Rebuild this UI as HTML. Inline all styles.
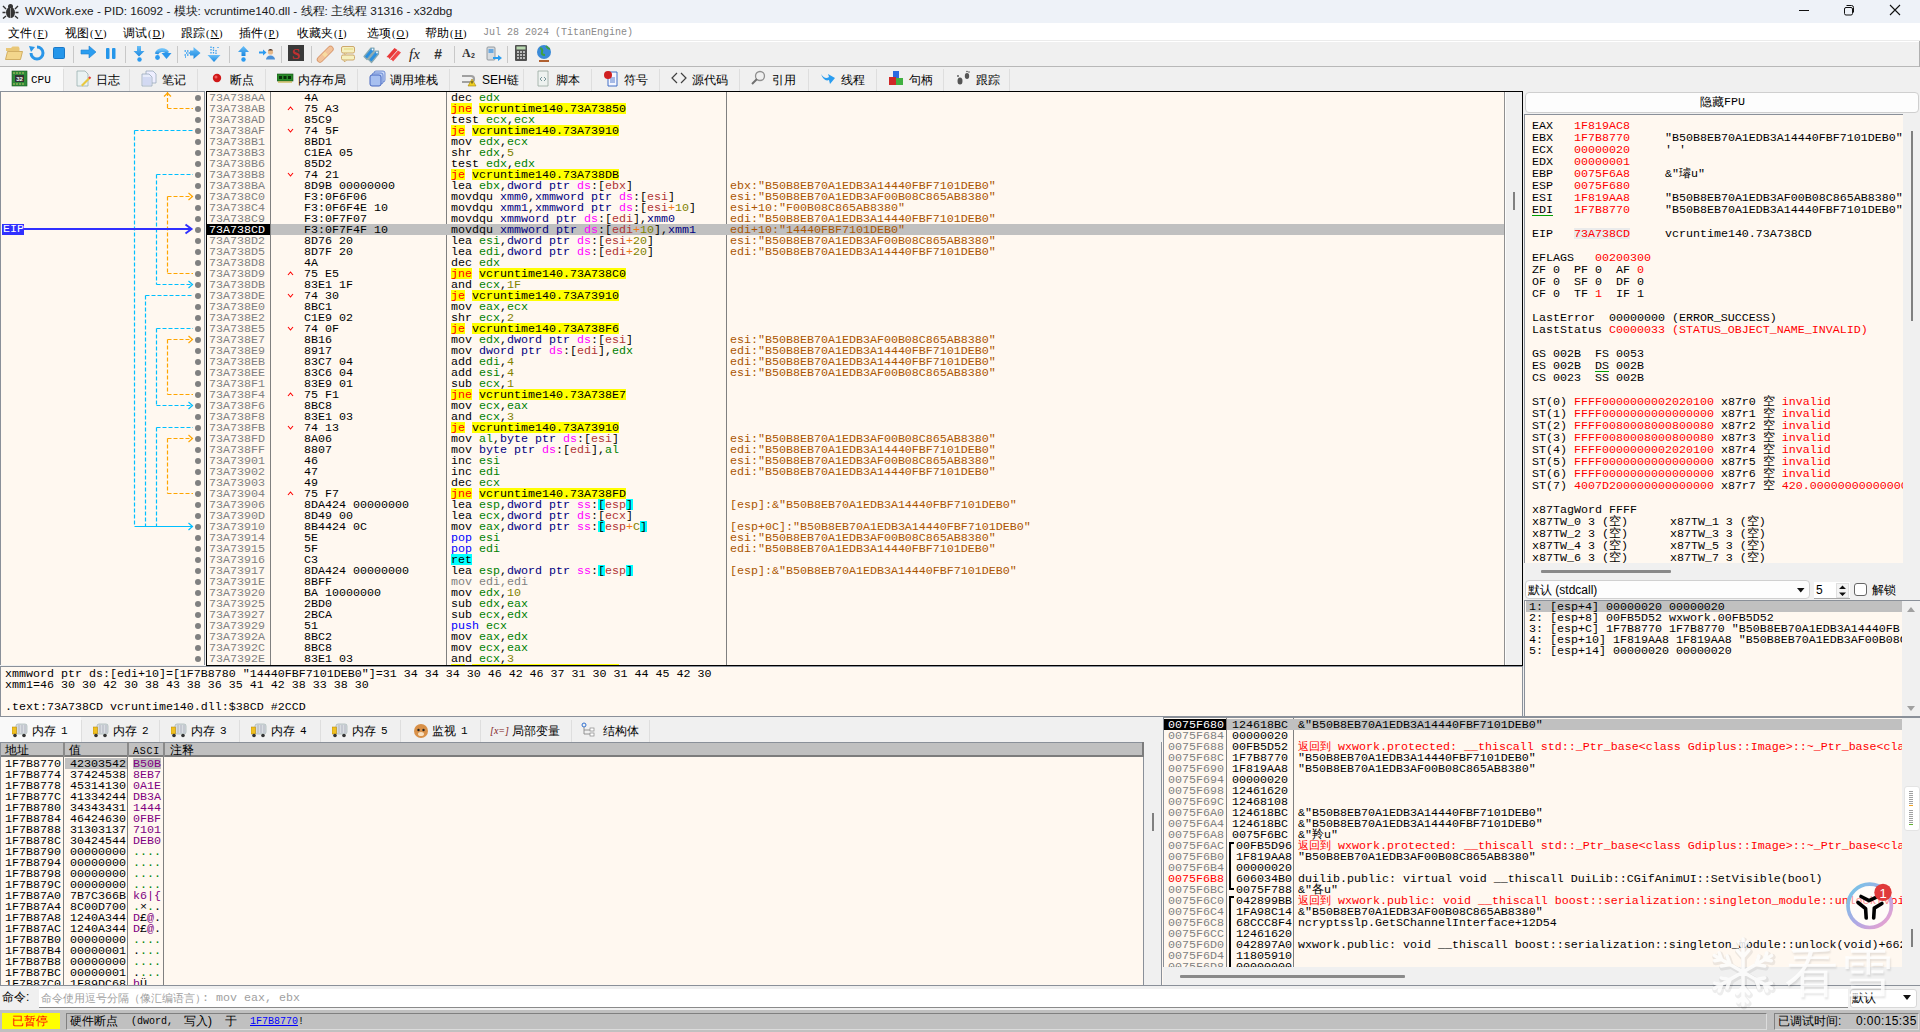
<!DOCTYPE html><html><head><meta charset="utf-8"><style>
html,body{margin:0;padding:0;width:1920px;height:1032px;overflow:hidden;background:#f0f0f0}
.a{position:absolute}
.m{font-family:"Liberation Mono",monospace;font-size:11.665px;line-height:11px;white-space:pre;color:#000}
.s{font-family:"Liberation Sans",sans-serif;white-space:pre;color:#000}
</style></head><body><div class="a" style="left:0px;top:0px;width:1920px;height:1032px;background:#f0f0f0"></div><div class="a" style="left:0px;top:0px;width:1920px;height:23px;background:#eef2f8"></div><div class="a" style="left:0px;top:23px;width:1920px;height:18px;background:#ffffff"></div><div class="a" style="left:0px;top:41px;width:1920px;height:25px;background:#f0f0f0"></div><div class="a" style="left:0px;top:66px;width:1920px;height:1px;background:#b8b8b8"></div><div class="a" style="left:0px;top:40px;width:1920px;height:1px;background:#ebebeb"></div><div class="a" style="left:0px;top:41px;width:1920px;height:1px;background:#ffffff"></div><div class="a" style="left:1919px;top:41px;width:1px;height:26px;background:#b0b0b0"></div><div class="a s" style="left:25px;top:4px;font-size:11.8px;line-height:15px;color:#1a1a1a">WXWork.exe - PID: 16092 - 模块: vcruntime140.dll - 线程: 主线程 31316 - x32dbg</div><svg class="a" style="left:2px;top:3px" width="17" height="16" viewBox="0 0 17 16"><ellipse cx="8.5" cy="9.5" rx="4.5" ry="5.5" fill="#333"/><circle cx="8.5" cy="3.5" r="2.5" fill="#333"/><path d="M4 6L1 3M13 6l3-3M3.5 9.5H0.5M13.5 9.5h3M4 13l-3 2.5M13 13l3 2.5" stroke="#333" stroke-width="1.4"/><path d="M8.5 5v10" stroke="#aaa" stroke-width="0.8"/></svg><svg class="a" style="left:1790px;top:0px" width="130" height="23"><path d="M9 10.5h10" stroke="#111" stroke-width="1"/><rect x="54.5" y="7.5" width="8" height="7.5" fill="none" stroke="#111" stroke-width="1" rx="1.5"/><path d="M56.5 5.5h5a2 2 0 0 1 2 2v5" fill="none" stroke="#111" stroke-width="1"/><path d="M100 5l10 10M110 5l-10 10" stroke="#111" stroke-width="1.1"/></svg><div class="a s" style="left:8px;top:26px;font-size:12px;line-height:15px;color:#000">文件</div><div class="a m" style="left:33px;top:27px;font-size:10.5px;line-height:14px;color:#000;font-family:Liberation Serif;letter-spacing:1px">(<u>F</u>)</div><div class="a s" style="left:65px;top:26px;font-size:12px;line-height:15px;color:#000">视图</div><div class="a m" style="left:90px;top:27px;font-size:10.5px;line-height:14px;color:#000;font-family:Liberation Serif;letter-spacing:1px">(<u>V</u>)</div><div class="a s" style="left:123px;top:26px;font-size:12px;line-height:15px;color:#000">调试</div><div class="a m" style="left:148px;top:27px;font-size:10.5px;line-height:14px;color:#000;font-family:Liberation Serif;letter-spacing:1px">(<u>D</u>)</div><div class="a s" style="left:181px;top:26px;font-size:12px;line-height:15px;color:#000">跟踪</div><div class="a m" style="left:206px;top:27px;font-size:10.5px;line-height:14px;color:#000;font-family:Liberation Serif;letter-spacing:1px">(<u>N</u>)</div><div class="a s" style="left:239px;top:26px;font-size:12px;line-height:15px;color:#000">插件</div><div class="a m" style="left:264px;top:27px;font-size:10.5px;line-height:14px;color:#000;font-family:Liberation Serif;letter-spacing:1px">(<u>P</u>)</div><div class="a s" style="left:297px;top:26px;font-size:12px;line-height:15px;color:#000">收藏夹</div><div class="a m" style="left:334px;top:27px;font-size:10.5px;line-height:14px;color:#000;font-family:Liberation Serif;letter-spacing:1px">(<u>I</u>)</div><div class="a s" style="left:367px;top:26px;font-size:12px;line-height:15px;color:#000">选项</div><div class="a m" style="left:392px;top:27px;font-size:10.5px;line-height:14px;color:#000;font-family:Liberation Serif;letter-spacing:1px">(<u>O</u>)</div><div class="a s" style="left:425px;top:26px;font-size:12px;line-height:15px;color:#000">帮助</div><div class="a m" style="left:450px;top:27px;font-size:10.5px;line-height:14px;color:#000;font-family:Liberation Serif;letter-spacing:1px">(<u>H</u>)</div><div class="a m" style="left:483px;top:27px;font-size:10px;color:#8a8a8a;line-height:12px">Jul 28 2024 (TitanEngine)</div><svg class="a" style="left:5px;top:44px" width="18" height="18" viewBox="0 0 18 18"><path d="M1 4h5l1.5-1.5h6l1 1.5v3H1z" fill="#e9c777"/><path d="M0.5 15.5l2-8h15l-2 8z" fill="#f3d68c" stroke="#c9a24e" stroke-width="0.8"/></svg><svg class="a" style="left:28px;top:44px" width="18" height="18" viewBox="0 0 18 18"><path d="M9 3a6 6 0 1 1-6 6" fill="none" stroke="#2a96e8" stroke-width="3"/><path d="M1 2l6 1-4 5z" fill="#2a96e8"/></svg><svg class="a" style="left:52px;top:44px" width="14" height="18" viewBox="0 0 14 18"><rect x="1.5" y="3.5" width="11" height="11" rx="1" fill="#2596ea" stroke="#1a78c8"/></svg><div class="a" style="left:73px;top:46px;width:1px;height:17px;background:#c8c8c8"></div><svg class="a" style="left:80px;top:43px" width="18" height="18" viewBox="0 0 18 18"><path d="M1 7h8V3l7 6-7 6v-4H1z" fill="#2a9df0" stroke="#1f80d0" stroke-width="0.6"/></svg><svg class="a" style="left:105px;top:45px" width="12" height="18" viewBox="0 0 12 18"><rect x="1" y="3" width="3.5" height="11" rx="1" fill="#2596ea"/><rect x="7" y="3" width="3.5" height="11" rx="1" fill="#2596ea"/></svg><div class="a" style="left:125px;top:46px;width:1px;height:17px;background:#c8c8c8"></div><svg class="a" style="left:0;top:40px" width="600" height="26" viewBox="0 40 600 26"><defs><linearGradient id="gb" x1="0" y1="0" x2="0" y2="1"><stop offset="0" stop-color="#6cc0f8"/><stop offset="1" stop-color="#1a88e0"/></linearGradient></defs><path d="M137 46h4v5h3.5l-5.5 5.5-5.5-5.5h3.5z" fill="url(#gb)"/><circle cx="139.5" cy="59.5" r="2.2" fill="#2a9af0"/></svg><svg class="a" style="left:0;top:40px" width="600" height="26" viewBox="0 40 600 26"><path d="M156.5 54a6 5.5 0 0 1 11 -1" fill="none" stroke="url(#gb)" stroke-width="3.6"/><path d="M161.5 53h10l-5 6z" fill="#2a96ec"/><circle cx="157.5" cy="57.5" r="2.4" fill="#2a9af0"/></svg><div class="a" style="left:177px;top:46px;width:1px;height:17px;background:#c8c8c8"></div><svg class="a" style="left:0;top:40px" width="600" height="26" viewBox="0 40 600 26"><path d="M190 50.5h3.5V47l7 6-7 6v-3.5H190z" fill="url(#gb)"/><path d="M184.5 51h1.5M187 51h1.5M186 53h1.5M188.5 53h1.5M184.5 55h1.5M187 55h1.5M185 57h1" stroke="#3aa0f0" stroke-width="1.3"/></svg><svg class="a" style="left:0;top:40px" width="600" height="26" viewBox="0 40 600 26"><path d="M207.5 55h13l-6.5 7z" fill="url(#gb)"/><path d="M211 46.5v1.5M213.5 47v1.5M211 49v1.5M213.5 49.5v1.5M216 50v1.5M211 52v1.5M213.5 52v1.5M216 52.5v1.5M218 47v1" stroke="#3aa0f0" stroke-width="1.3"/></svg><div class="a" style="left:229px;top:46px;width:1px;height:17px;background:#c8c8c8"></div><svg class="a" style="left:0;top:40px" width="600" height="26" viewBox="0 40 600 26"><path d="M243.5 46l5.5 6h-3.5v4h-4v-4H238z" fill="url(#gb)"/><circle cx="243.5" cy="59.5" r="2.2" fill="#2a9af0"/></svg><svg class="a" style="left:0;top:40px" width="600" height="26" viewBox="0 40 600 26"><path d="M259 51.5h4v-2l3.5 3-3.5 3v-2h-4z" fill="#2a9af0"/><path d="M266 59.5a4.5 4 0 0 1 9 0z" fill="#4a90d8"/><circle cx="270.5" cy="52" r="2.6" fill="#e8b888"/><path d="M268 50.5a2.6 2.2 0 0 1 5 0z" fill="#4a3020"/></svg><div class="a" style="left:281px;top:46px;width:1px;height:17px;background:#c8c8c8"></div><svg class="a" style="left:288px;top:45px" width="16" height="16" viewBox="0 0 16 16"><rect x="0" y="0" width="16" height="16" fill="#3a3a3a"/><text x="8" y="13.5" text-anchor="middle" font-family="Liberation Serif" font-weight="bold" font-size="15" fill="#c03030">S</text></svg><div class="a" style="left:311px;top:46px;width:1px;height:17px;background:#c8c8c8"></div><svg class="a" style="left:0;top:40px" width="600" height="26" viewBox="0 40 600 26"><path d="M320 59.5L330.5 49" stroke="#d89a70" stroke-width="6.4" stroke-linecap="round"/><path d="M320 59.5L330.5 49" stroke="#f2c29a" stroke-width="4.6" stroke-linecap="round"/><rect x="323" y="52.5" width="4" height="4" fill="#f8dca0" transform="rotate(-45 325 54.5)"/></svg><svg class="a" style="left:0;top:40px" width="600" height="26" viewBox="0 40 600 26"><rect x="341.5" y="46.5" width="13" height="6.5" rx="1.5" fill="#f6f0c0" stroke="#c8a060" stroke-width="0.9"/><path d="M344 53l1 1.5 1.5-1.5" fill="#f6f0c0" stroke="#c8a060" stroke-width="0.8"/><rect x="341.5" y="55" width="13" height="5" rx="1.5" fill="#f6f0c0" stroke="#c8a060" stroke-width="0.9"/><path d="M344 60l0.5 2 2-2" fill="#f6f0c0" stroke="#c8a060" stroke-width="0.8"/><path d="M344 49h9" stroke="#e8e090" stroke-width="1.5"/></svg><svg class="a" style="left:0;top:40px" width="600" height="26" viewBox="0 40 600 26"><path d="M364 56.5l7-8.5h3v3l-7 8.5z" fill="#2a90e0" stroke="#88a8b0" stroke-width="1.2" stroke-linejoin="round"/><path d="M368.5 59.5l7-8.5h3v3l-7 8.5z" fill="#2a90e0" stroke="#88a8b0" stroke-width="1.2" stroke-linejoin="round"/><circle cx="372.5" cy="49.5" r="0.9" fill="#fff"/><circle cx="377" cy="52.5" r="0.9" fill="#fff"/></svg><svg class="a" style="left:0;top:40px" width="600" height="26" viewBox="0 40 600 26"><path d="M386.5 57l8-9 3 2-8 9-1-1.5z" fill="#e83838"/><path d="M390 59.5l8-9 3 2-8 9-1-1.5z" fill="#f04848"/></svg><svg class="a" style="left:0;top:40px" width="600" height="26" viewBox="0 40 600 26"><text x="409" y="58.5" font-family="Liberation Serif" font-style="italic" font-size="15" fill="#222">fx</text></svg><svg class="a" style="left:0;top:40px" width="600" height="26" viewBox="0 40 600 26"><text x="434" y="59" font-family="Liberation Sans" font-style="italic" font-weight="bold" font-size="14" fill="#333">#</text></svg><div class="a" style="left:454px;top:46px;width:1px;height:17px;background:#c8c8c8"></div><svg class="a" style="left:462px;top:44px" width="16" height="18" viewBox="0 0 16 18"><text x="0" y="13" font-family="Liberation Serif" font-weight="bold" font-size="12" fill="#333">A</text><text x="9" y="14" font-family="Liberation Sans" font-weight="bold" font-size="7" fill="#333">2</text></svg><svg class="a" style="left:485px;top:44px" width="18" height="18" viewBox="0 0 18 18"><rect x="2" y="3" width="8" height="13" rx="1" fill="#d8dce0" stroke="#808890" stroke-width="0.8"/><rect x="3.5" y="5" width="5" height="4" fill="#6aa8e0"/><path d="M8 13h5v-2l4 3-4 3v-2H8z" fill="#2a9df0"/></svg><div class="a" style="left:507px;top:46px;width:1px;height:17px;background:#c8c8c8"></div><svg class="a" style="left:514px;top:44px" width="14" height="18" viewBox="0 0 14 18"><rect x="1" y="1" width="12" height="16" rx="1" fill="#505050"/><rect x="2.5" y="2.5" width="9" height="3" fill="#b8d8b0"/><path d="M3 8h2M6 8h2M9 8h2M3 11h2M6 11h2M9 11h2M3 14h2M6 14h2M9 14h2" stroke="#ddd" stroke-width="1.5"/></svg><svg class="a" style="left:536px;top:44px" width="17" height="18" viewBox="0 0 17 18"><circle cx="8" cy="8" r="7" fill="#3a8ad8"/><path d="M4 4q3 1 2 4t3 3M10 2q2 3 4 3" fill="none" stroke="#40a040" stroke-width="2"/><path d="M3 17h10" stroke="#b06030" stroke-width="2"/></svg><div class="a" style="left:0px;top:67px;width:63px;height:24px;background:#f9f9f9"></div><div class="a" style="left:63px;top:69px;width:1px;height:22px;background:#dedede"></div><div class="a" style="left:129px;top:69px;width:1px;height:22px;background:#dedede"></div><div class="a" style="left:197px;top:69px;width:1px;height:22px;background:#dedede"></div><div class="a" style="left:265px;top:69px;width:1px;height:22px;background:#dedede"></div><div class="a" style="left:357px;top:69px;width:1px;height:22px;background:#dedede"></div><div class="a" style="left:449px;top:69px;width:1px;height:22px;background:#dedede"></div><div class="a" style="left:523px;top:69px;width:1px;height:22px;background:#dedede"></div><div class="a" style="left:591px;top:69px;width:1px;height:22px;background:#dedede"></div><div class="a" style="left:659px;top:69px;width:1px;height:22px;background:#dedede"></div><div class="a" style="left:739px;top:69px;width:1px;height:22px;background:#dedede"></div><div class="a" style="left:808px;top:69px;width:1px;height:22px;background:#dedede"></div><div class="a" style="left:876px;top:69px;width:1px;height:22px;background:#dedede"></div><div class="a" style="left:943px;top:69px;width:1px;height:22px;background:#dedede"></div><div class="a" style="left:1009px;top:69px;width:1px;height:22px;background:#dedede"></div><svg class="a" style="left:11px;top:70px" width="17" height="17" viewBox="0 0 17 17"><rect x="1" y="1" width="15" height="15" fill="#2e8a3a" stroke="#1a5a20" stroke-width="0.6"/><rect x="4" y="5" width="9" height="7" fill="#333"/><text x="8.5" y="11" text-anchor="middle" font-family="Liberation Sans" font-weight="bold" font-size="6" fill="#fff">32</text><path d="M3 2v2M6 2v2M9 2v2M12 2v2M3 13v2M6 13v2M9 13v2M12 13v2" stroke="#e8d070" stroke-width="0.8"/></svg><div class="a m" style="left:31px;top:74px;font-size:11px;line-height:13px;color:#000">CPU</div><svg class="a" style="left:75px;top:70px" width="17" height="17" viewBox="0 0 17 17"><path d="M2 1h8l3 3v12H2z" fill="#eaf2f2" stroke="#9ab0b0" stroke-width="0.8"/><path d="M6 15l8-8 1.5 1.5-8 8z" fill="#e8c840"/><path d="M14 7l1.5 1.5" stroke="#e04040" stroke-width="2"/></svg><div class="a s" style="left:96px;top:73px;font-size:12px;line-height:14px;color:#000">日志</div><svg class="a" style="left:141px;top:70px" width="17" height="17" viewBox="0 0 17 17"><path d="M5 1h7l3 3v9H5z" fill="#eef" stroke="#9ab" stroke-width="0.8"/><path d="M1 4h7l3 3v9H1z" fill="#e8ecfa" stroke="#9ab" stroke-width="0.8"/><path d="M2 8h8M2 10h8M2 12h8M2 14h8" stroke="#a0b0e0" stroke-width="0.6"/></svg><div class="a s" style="left:162px;top:73px;font-size:12px;line-height:14px;color:#000">笔记</div><svg class="a" style="left:209px;top:70px" width="17" height="17" viewBox="0 0 17 17"><circle cx="8" cy="8" r="4.2" fill="#d01818"/><circle cx="7" cy="7" r="1.5" fill="#f06060"/></svg><div class="a s" style="left:230px;top:73px;font-size:12px;line-height:14px;color:#000">断点</div><svg class="a" style="left:277px;top:70px" width="17" height="17" viewBox="0 0 17 17"><rect x="0" y="4" width="16" height="7" fill="#2a8a2a" stroke="#145014" stroke-width="0.6"/><rect x="2" y="6" width="3" height="3" fill="#0a300a"/><rect x="6.5" y="6" width="3" height="3" fill="#0a300a"/><rect x="11" y="6" width="3" height="3" fill="#0a300a"/><path d="M1 12h14" stroke="#c8b040" stroke-width="1.2"/></svg><div class="a s" style="left:298px;top:73px;font-size:12px;line-height:14px;color:#000">内存布局</div><svg class="a" style="left:369px;top:70px" width="17" height="17" viewBox="0 0 17 17"><rect x="5" y="1" width="11" height="11" rx="2" fill="#c8d8f8" stroke="#5878c8" stroke-width="0.8"/><rect x="3" y="3" width="11" height="11" rx="2" fill="#b8ccf4" stroke="#5878c8" stroke-width="0.8"/><rect x="1" y="5" width="11" height="11" rx="2" fill="#a8c0f0" stroke="#4868c0" stroke-width="1"/></svg><div class="a s" style="left:390px;top:73px;font-size:12px;line-height:14px;color:#000">调用堆栈</div><svg class="a" style="left:461px;top:70px" width="17" height="17" viewBox="0 0 17 17"><path d="M1 6h9a3 3 0 0 1 0 6H1" fill="none" stroke="#a0a0a0" stroke-width="2.2"/><path d="M11 9l4 7H7z" fill="#f0d020" stroke="#a08010" stroke-width="0.6"/><path d="M11 11v2.5" stroke="#222" stroke-width="1"/></svg><div class="a s" style="left:482px;top:73px;font-size:12px;line-height:14px;color:#000">SEH链</div><svg class="a" style="left:535px;top:70px" width="17" height="17" viewBox="0 0 17 17"><path d="M3 1h10v15H3z" fill="#eef2f0" stroke="#98a8a0" stroke-width="0.8"/><path d="M7 7l-2 2 2 2M9 7l2 2-2 2" fill="none" stroke="#6a8a90" stroke-width="0.9"/></svg><div class="a s" style="left:556px;top:73px;font-size:12px;line-height:14px;color:#000">脚本</div><svg class="a" style="left:603px;top:70px" width="17" height="17" viewBox="0 0 17 17"><path d="M5 2h9v14H5z" fill="#f4f6ff" stroke="#3060c0" stroke-width="0.9"/><path d="M7 8h5M7 10h5M7 12h5" stroke="#3060c0" stroke-width="0.8"/><circle cx="5" cy="5" r="4" fill="#d02020"/></svg><div class="a s" style="left:624px;top:73px;font-size:12px;line-height:14px;color:#000">符号</div><svg class="a" style="left:671px;top:70px" width="17" height="17" viewBox="0 0 17 17"><path d="M6 3L1 8l5 5M10 3l5 5-5 5" fill="none" stroke="#404040" stroke-width="1.2"/></svg><div class="a s" style="left:692px;top:73px;font-size:12px;line-height:14px;color:#000">源代码</div><svg class="a" style="left:751px;top:70px" width="17" height="17" viewBox="0 0 17 17"><circle cx="9" cy="6" r="4.5" fill="none" stroke="#909090" stroke-width="1.3"/><path d="M6 9l-5 5" stroke="#707070" stroke-width="2"/></svg><div class="a s" style="left:772px;top:73px;font-size:12px;line-height:14px;color:#000">引用</div><svg class="a" style="left:820px;top:70px" width="17" height="17" viewBox="0 0 17 17"><path d="M1 4q4 6 8 3l-1-3 7 4-5 6-1-4q-5 2-8-6z" fill="#2a9df0"/></svg><div class="a s" style="left:841px;top:73px;font-size:12px;line-height:14px;color:#000">线程</div><svg class="a" style="left:888px;top:70px" width="17" height="17" viewBox="0 0 17 17"><rect x="5" y="1" width="6" height="7" fill="#2a6ae0"/><rect x="1" y="7" width="7" height="8" fill="#d02828"/><rect x="8" y="8" width="7" height="7" fill="#40b040"/></svg><div class="a s" style="left:909px;top:73px;font-size:12px;line-height:14px;color:#000">句柄</div><svg class="a" style="left:955px;top:70px" width="17" height="17" viewBox="0 0 17 17"><ellipse cx="5" cy="11" rx="2.5" ry="3.5" fill="#555"/><ellipse cx="12" cy="6" rx="2.2" ry="3" fill="#555"/><circle cx="3" cy="6" r="0.9" fill="#555"/><circle cx="12" cy="1.5" r="0.8" fill="#555"/><circle cx="14" cy="2" r="0.8" fill="#555"/></svg><div class="a s" style="left:976px;top:73px;font-size:12px;line-height:14px;color:#000">跟踪</div><div class="a" style="left:0px;top:91px;width:205px;height:574px;background:#fff8f0"></div><div class="a" style="left:0px;top:91px;width:205px;height:1px;background:#8a9099"></div><div class="a" style="left:204px;top:91px;width:1px;height:574px;background:#8a9099"></div><div class="a" style="left:0px;top:91px;width:1px;height:574px;background:#8a9099"></div><div class="a" style="left:206px;top:91px;width:1317px;height:575px;background:#000"></div><div class="a" style="left:207px;top:92px;width:1315px;height:573px;background:#fff8f0"></div><div class="a" style="left:1505px;top:92px;width:17px;height:573px;background:#f0f0f0"></div><div class="a" style="left:1504px;top:92px;width:1px;height:573px;background:#909090"></div><div class="a" style="left:1505px;top:92px;width:1px;height:573px;background:#fcfcfc"></div><div class="a" style="left:1513px;top:192px;width:2px;height:18px;background:#808080"></div><div class="a" style="left:270px;top:92px;width:1px;height:573px;background:#808080"></div><div class="a" style="left:446px;top:92px;width:1px;height:573px;background:#808080"></div><div class="a" style="left:726px;top:92px;width:1px;height:573px;background:#808080"></div><div class="a" style="left:195px;top:95px;width:6px;height:6px;background:#808080;border-radius:50%"></div><div class="a m" style="left:209px;top:93px;"><span style="color:#808080;">73A738AA</span></div><div class="a m" style="left:304px;top:93px;">4A</div><div class="a m" style="left:451px;top:93px;"><span style="color:#000;">dec</span> <span style="color:#008000;">edx</span></div><div class="a" style="left:195px;top:106px;width:6px;height:6px;background:#808080;border-radius:50%"></div><div class="a m" style="left:209px;top:104px;"><span style="color:#808080;">73A738AB</span></div><svg class="a" style="left:287px;top:105px" width="7" height="6"><path d="M1 5L3.5 2 6 5" fill="none" stroke="#f00" stroke-width="1.1"/></svg><div class="a m" style="left:304px;top:104px;">75 A3</div><div class="a m" style="left:451px;top:104px;"><span style="color:#ff0000;background:#ffff00;display:inline-block;height:10px;margin-top:-1px;padding-top:1px;vertical-align:top;">jne</span> <span style="color:#000;background:#ffff00;display:inline-block;height:10px;margin-top:-1px;padding-top:1px;vertical-align:top;">vcruntime140.73A73850</span></div><div class="a" style="left:195px;top:117px;width:6px;height:6px;background:#808080;border-radius:50%"></div><div class="a m" style="left:209px;top:115px;"><span style="color:#808080;">73A738AD</span></div><div class="a m" style="left:304px;top:115px;">85C9</div><div class="a m" style="left:451px;top:115px;"><span style="color:#000;">test</span> <span style="color:#008000;">ecx</span><span style="color:#000;">,</span><span style="color:#008000;">ecx</span></div><div class="a" style="left:195px;top:128px;width:6px;height:6px;background:#808080;border-radius:50%"></div><div class="a m" style="left:209px;top:126px;"><span style="color:#808080;">73A738AF</span></div><svg class="a" style="left:287px;top:128px" width="7" height="6"><path d="M1 1L3.5 4 6 1" fill="none" stroke="#f00" stroke-width="1.1"/></svg><div class="a m" style="left:304px;top:126px;">74 5F</div><div class="a m" style="left:451px;top:126px;"><span style="color:#ff0000;background:#ffff00;display:inline-block;height:10px;margin-top:-1px;padding-top:1px;vertical-align:top;">je</span> <span style="color:#000;background:#ffff00;display:inline-block;height:10px;margin-top:-1px;padding-top:1px;vertical-align:top;">vcruntime140.73A73910</span></div><div class="a" style="left:195px;top:139px;width:6px;height:6px;background:#808080;border-radius:50%"></div><div class="a m" style="left:209px;top:137px;"><span style="color:#808080;">73A738B1</span></div><div class="a m" style="left:304px;top:137px;">8BD1</div><div class="a m" style="left:451px;top:137px;"><span style="color:#000;">mov</span> <span style="color:#008000;">edx</span><span style="color:#000;">,</span><span style="color:#008000;">ecx</span></div><div class="a" style="left:195px;top:150px;width:6px;height:6px;background:#808080;border-radius:50%"></div><div class="a m" style="left:209px;top:148px;"><span style="color:#808080;">73A738B3</span></div><div class="a m" style="left:304px;top:148px;">C1EA 05</div><div class="a m" style="left:451px;top:148px;"><span style="color:#000;">shr</span> <span style="color:#008000;">edx</span><span style="color:#000;">,</span><span style="color:#828200;">5</span></div><div class="a" style="left:195px;top:161px;width:6px;height:6px;background:#808080;border-radius:50%"></div><div class="a m" style="left:209px;top:159px;"><span style="color:#808080;">73A738B6</span></div><div class="a m" style="left:304px;top:159px;">85D2</div><div class="a m" style="left:451px;top:159px;"><span style="color:#000;">test</span> <span style="color:#008000;">edx</span><span style="color:#000;">,</span><span style="color:#008000;">edx</span></div><div class="a" style="left:195px;top:172px;width:6px;height:6px;background:#808080;border-radius:50%"></div><div class="a m" style="left:209px;top:170px;"><span style="color:#808080;">73A738B8</span></div><svg class="a" style="left:287px;top:172px" width="7" height="6"><path d="M1 1L3.5 4 6 1" fill="none" stroke="#f00" stroke-width="1.1"/></svg><div class="a m" style="left:304px;top:170px;">74 21</div><div class="a m" style="left:451px;top:170px;"><span style="color:#ff0000;background:#ffff00;display:inline-block;height:10px;margin-top:-1px;padding-top:1px;vertical-align:top;">je</span> <span style="color:#000;background:#ffff00;display:inline-block;height:10px;margin-top:-1px;padding-top:1px;vertical-align:top;">vcruntime140.73A738DB</span></div><div class="a" style="left:195px;top:183px;width:6px;height:6px;background:#808080;border-radius:50%"></div><div class="a m" style="left:209px;top:181px;"><span style="color:#808080;">73A738BA</span></div><div class="a m" style="left:304px;top:181px;">8D9B 00000000</div><div class="a m" style="left:451px;top:181px;"><span style="color:#000;">lea</span> <span style="color:#008000;">ebx</span><span style="color:#000;">,</span><span style="color:#000080;">dword ptr</span> <span style="color:#ff00ff;">ds</span><span style="color:#000;">:</span><span style="color:#000;">[</span><span style="color:#b03434;">ebx</span><span style="color:#000;">]</span></div><div class="a m" style="left:730px;top:181px;"><span style="color:#aa5500;">ebx:"B50B8EB70A1EDB3A14440FBF7101DEB0"</span></div><div class="a" style="left:195px;top:194px;width:6px;height:6px;background:#808080;border-radius:50%"></div><div class="a m" style="left:209px;top:192px;"><span style="color:#808080;">73A738C0</span></div><div class="a m" style="left:304px;top:192px;">F3:0F6F06</div><div class="a m" style="left:451px;top:192px;"><span style="color:#000;">movdqu</span> <span style="color:#000080;">xmm0</span><span style="color:#000;">,</span><span style="color:#000080;">xmmword ptr</span> <span style="color:#ff00ff;">ds</span><span style="color:#000;">:</span><span style="color:#000;">[</span><span style="color:#b03434;">esi</span><span style="color:#000;">]</span></div><div class="a m" style="left:730px;top:192px;"><span style="color:#aa5500;">esi:"B50B8EB70A1EDB3AF00B08C865AB8380"</span></div><div class="a" style="left:195px;top:205px;width:6px;height:6px;background:#808080;border-radius:50%"></div><div class="a m" style="left:209px;top:203px;"><span style="color:#808080;">73A738C4</span></div><div class="a m" style="left:304px;top:203px;">F3:0F6F4E 10</div><div class="a m" style="left:451px;top:203px;"><span style="color:#000;">movdqu</span> <span style="color:#000080;">xmm1</span><span style="color:#000;">,</span><span style="color:#000080;">xmmword ptr</span> <span style="color:#ff00ff;">ds</span><span style="color:#000;">:</span><span style="color:#000;">[</span><span style="color:#b03434;">esi</span><span style="color:#f27711;">+</span><span style="color:#828200;">10</span><span style="color:#000;">]</span></div><div class="a m" style="left:730px;top:203px;"><span style="color:#aa5500;">esi+10:"F00B08C865AB8380"</span></div><div class="a" style="left:195px;top:216px;width:6px;height:6px;background:#808080;border-radius:50%"></div><div class="a m" style="left:209px;top:214px;"><span style="color:#808080;">73A738C9</span></div><div class="a m" style="left:304px;top:214px;">F3:0F7F07</div><div class="a m" style="left:451px;top:214px;"><span style="color:#000;">movdqu</span> <span style="color:#000080;">xmmword ptr</span> <span style="color:#ff00ff;">ds</span><span style="color:#000;">:</span><span style="color:#000;">[</span><span style="color:#b03434;">edi</span><span style="color:#000;">]</span><span style="color:#000;">,</span><span style="color:#000080;">xmm0</span></div><div class="a m" style="left:730px;top:214px;"><span style="color:#aa5500;">edi:"B50B8EB70A1EDB3A14440FBF7101DEB0"</span></div><div class="a" style="left:207px;top:224px;width:63px;height:11px;background:#000"></div><div class="a" style="left:271px;top:224px;width:1233px;height:11px;background:#c0c0c0"></div><div class="a" style="left:195px;top:227px;width:6px;height:6px;background:#808080;border-radius:50%"></div><div class="a m" style="left:209px;top:225px;"><span style="color:#fff;">73A738CD</span></div><div class="a m" style="left:304px;top:225px;">F3:0F7F4F 10</div><div class="a m" style="left:451px;top:225px;"><span style="color:#000;">movdqu</span> <span style="color:#000080;">xmmword ptr</span> <span style="color:#ff00ff;">ds</span><span style="color:#000;">:</span><span style="color:#000;">[</span><span style="color:#b03434;">edi</span><span style="color:#f27711;">+</span><span style="color:#828200;">10</span><span style="color:#000;">]</span><span style="color:#000;">,</span><span style="color:#000080;">xmm1</span></div><div class="a m" style="left:730px;top:225px;"><span style="color:#aa5500;">edi+10:"14440FBF7101DEB0"</span></div><div class="a" style="left:195px;top:238px;width:6px;height:6px;background:#808080;border-radius:50%"></div><div class="a m" style="left:209px;top:236px;"><span style="color:#808080;">73A738D2</span></div><div class="a m" style="left:304px;top:236px;">8D76 20</div><div class="a m" style="left:451px;top:236px;"><span style="color:#000;">lea</span> <span style="color:#008000;">esi</span><span style="color:#000;">,</span><span style="color:#000080;">dword ptr</span> <span style="color:#ff00ff;">ds</span><span style="color:#000;">:</span><span style="color:#000;">[</span><span style="color:#b03434;">esi</span><span style="color:#f27711;">+</span><span style="color:#828200;">20</span><span style="color:#000;">]</span></div><div class="a m" style="left:730px;top:236px;"><span style="color:#aa5500;">esi:"B50B8EB70A1EDB3AF00B08C865AB8380"</span></div><div class="a" style="left:195px;top:249px;width:6px;height:6px;background:#808080;border-radius:50%"></div><div class="a m" style="left:209px;top:247px;"><span style="color:#808080;">73A738D5</span></div><div class="a m" style="left:304px;top:247px;">8D7F 20</div><div class="a m" style="left:451px;top:247px;"><span style="color:#000;">lea</span> <span style="color:#008000;">edi</span><span style="color:#000;">,</span><span style="color:#000080;">dword ptr</span> <span style="color:#ff00ff;">ds</span><span style="color:#000;">:</span><span style="color:#000;">[</span><span style="color:#b03434;">edi</span><span style="color:#f27711;">+</span><span style="color:#828200;">20</span><span style="color:#000;">]</span></div><div class="a m" style="left:730px;top:247px;"><span style="color:#aa5500;">edi:"B50B8EB70A1EDB3A14440FBF7101DEB0"</span></div><div class="a" style="left:195px;top:260px;width:6px;height:6px;background:#808080;border-radius:50%"></div><div class="a m" style="left:209px;top:258px;"><span style="color:#808080;">73A738D8</span></div><div class="a m" style="left:304px;top:258px;">4A</div><div class="a m" style="left:451px;top:258px;"><span style="color:#000;">dec</span> <span style="color:#008000;">edx</span></div><div class="a" style="left:195px;top:271px;width:6px;height:6px;background:#808080;border-radius:50%"></div><div class="a m" style="left:209px;top:269px;"><span style="color:#808080;">73A738D9</span></div><svg class="a" style="left:287px;top:270px" width="7" height="6"><path d="M1 5L3.5 2 6 5" fill="none" stroke="#f00" stroke-width="1.1"/></svg><div class="a m" style="left:304px;top:269px;">75 E5</div><div class="a m" style="left:451px;top:269px;"><span style="color:#ff0000;background:#ffff00;display:inline-block;height:10px;margin-top:-1px;padding-top:1px;vertical-align:top;">jne</span> <span style="color:#000;background:#ffff00;display:inline-block;height:10px;margin-top:-1px;padding-top:1px;vertical-align:top;">vcruntime140.73A738C0</span></div><div class="a" style="left:195px;top:282px;width:6px;height:6px;background:#808080;border-radius:50%"></div><div class="a m" style="left:209px;top:280px;"><span style="color:#808080;">73A738DB</span></div><div class="a m" style="left:304px;top:280px;">83E1 1F</div><div class="a m" style="left:451px;top:280px;"><span style="color:#000;">and</span> <span style="color:#008000;">ecx</span><span style="color:#000;">,</span><span style="color:#828200;">1F</span></div><div class="a" style="left:195px;top:293px;width:6px;height:6px;background:#808080;border-radius:50%"></div><div class="a m" style="left:209px;top:291px;"><span style="color:#808080;">73A738DE</span></div><svg class="a" style="left:287px;top:293px" width="7" height="6"><path d="M1 1L3.5 4 6 1" fill="none" stroke="#f00" stroke-width="1.1"/></svg><div class="a m" style="left:304px;top:291px;">74 30</div><div class="a m" style="left:451px;top:291px;"><span style="color:#ff0000;background:#ffff00;display:inline-block;height:10px;margin-top:-1px;padding-top:1px;vertical-align:top;">je</span> <span style="color:#000;background:#ffff00;display:inline-block;height:10px;margin-top:-1px;padding-top:1px;vertical-align:top;">vcruntime140.73A73910</span></div><div class="a" style="left:195px;top:304px;width:6px;height:6px;background:#808080;border-radius:50%"></div><div class="a m" style="left:209px;top:302px;"><span style="color:#808080;">73A738E0</span></div><div class="a m" style="left:304px;top:302px;">8BC1</div><div class="a m" style="left:451px;top:302px;"><span style="color:#000;">mov</span> <span style="color:#008000;">eax</span><span style="color:#000;">,</span><span style="color:#008000;">ecx</span></div><div class="a" style="left:195px;top:315px;width:6px;height:6px;background:#808080;border-radius:50%"></div><div class="a m" style="left:209px;top:313px;"><span style="color:#808080;">73A738E2</span></div><div class="a m" style="left:304px;top:313px;">C1E9 02</div><div class="a m" style="left:451px;top:313px;"><span style="color:#000;">shr</span> <span style="color:#008000;">ecx</span><span style="color:#000;">,</span><span style="color:#828200;">2</span></div><div class="a" style="left:195px;top:326px;width:6px;height:6px;background:#808080;border-radius:50%"></div><div class="a m" style="left:209px;top:324px;"><span style="color:#808080;">73A738E5</span></div><svg class="a" style="left:287px;top:326px" width="7" height="6"><path d="M1 1L3.5 4 6 1" fill="none" stroke="#f00" stroke-width="1.1"/></svg><div class="a m" style="left:304px;top:324px;">74 0F</div><div class="a m" style="left:451px;top:324px;"><span style="color:#ff0000;background:#ffff00;display:inline-block;height:10px;margin-top:-1px;padding-top:1px;vertical-align:top;">je</span> <span style="color:#000;background:#ffff00;display:inline-block;height:10px;margin-top:-1px;padding-top:1px;vertical-align:top;">vcruntime140.73A738F6</span></div><div class="a" style="left:195px;top:337px;width:6px;height:6px;background:#808080;border-radius:50%"></div><div class="a m" style="left:209px;top:335px;"><span style="color:#808080;">73A738E7</span></div><div class="a m" style="left:304px;top:335px;">8B16</div><div class="a m" style="left:451px;top:335px;"><span style="color:#000;">mov</span> <span style="color:#008000;">edx</span><span style="color:#000;">,</span><span style="color:#000080;">dword ptr</span> <span style="color:#ff00ff;">ds</span><span style="color:#000;">:</span><span style="color:#000;">[</span><span style="color:#b03434;">esi</span><span style="color:#000;">]</span></div><div class="a m" style="left:730px;top:335px;"><span style="color:#aa5500;">esi:"B50B8EB70A1EDB3AF00B08C865AB8380"</span></div><div class="a" style="left:195px;top:348px;width:6px;height:6px;background:#808080;border-radius:50%"></div><div class="a m" style="left:209px;top:346px;"><span style="color:#808080;">73A738E9</span></div><div class="a m" style="left:304px;top:346px;">8917</div><div class="a m" style="left:451px;top:346px;"><span style="color:#000;">mov</span> <span style="color:#000080;">dword ptr</span> <span style="color:#ff00ff;">ds</span><span style="color:#000;">:</span><span style="color:#000;">[</span><span style="color:#b03434;">edi</span><span style="color:#000;">]</span><span style="color:#000;">,</span><span style="color:#008000;">edx</span></div><div class="a m" style="left:730px;top:346px;"><span style="color:#aa5500;">edi:"B50B8EB70A1EDB3A14440FBF7101DEB0"</span></div><div class="a" style="left:195px;top:359px;width:6px;height:6px;background:#808080;border-radius:50%"></div><div class="a m" style="left:209px;top:357px;"><span style="color:#808080;">73A738EB</span></div><div class="a m" style="left:304px;top:357px;">83C7 04</div><div class="a m" style="left:451px;top:357px;"><span style="color:#000;">add</span> <span style="color:#008000;">edi</span><span style="color:#000;">,</span><span style="color:#828200;">4</span></div><div class="a m" style="left:730px;top:357px;"><span style="color:#aa5500;">edi:"B50B8EB70A1EDB3A14440FBF7101DEB0"</span></div><div class="a" style="left:195px;top:370px;width:6px;height:6px;background:#808080;border-radius:50%"></div><div class="a m" style="left:209px;top:368px;"><span style="color:#808080;">73A738EE</span></div><div class="a m" style="left:304px;top:368px;">83C6 04</div><div class="a m" style="left:451px;top:368px;"><span style="color:#000;">add</span> <span style="color:#008000;">esi</span><span style="color:#000;">,</span><span style="color:#828200;">4</span></div><div class="a m" style="left:730px;top:368px;"><span style="color:#aa5500;">esi:"B50B8EB70A1EDB3AF00B08C865AB8380"</span></div><div class="a" style="left:195px;top:381px;width:6px;height:6px;background:#808080;border-radius:50%"></div><div class="a m" style="left:209px;top:379px;"><span style="color:#808080;">73A738F1</span></div><div class="a m" style="left:304px;top:379px;">83E9 01</div><div class="a m" style="left:451px;top:379px;"><span style="color:#000;">sub</span> <span style="color:#008000;">ecx</span><span style="color:#000;">,</span><span style="color:#828200;">1</span></div><div class="a" style="left:195px;top:392px;width:6px;height:6px;background:#808080;border-radius:50%"></div><div class="a m" style="left:209px;top:390px;"><span style="color:#808080;">73A738F4</span></div><svg class="a" style="left:287px;top:391px" width="7" height="6"><path d="M1 5L3.5 2 6 5" fill="none" stroke="#f00" stroke-width="1.1"/></svg><div class="a m" style="left:304px;top:390px;">75 F1</div><div class="a m" style="left:451px;top:390px;"><span style="color:#ff0000;background:#ffff00;display:inline-block;height:10px;margin-top:-1px;padding-top:1px;vertical-align:top;">jne</span> <span style="color:#000;background:#ffff00;display:inline-block;height:10px;margin-top:-1px;padding-top:1px;vertical-align:top;">vcruntime140.73A738E7</span></div><div class="a" style="left:195px;top:403px;width:6px;height:6px;background:#808080;border-radius:50%"></div><div class="a m" style="left:209px;top:401px;"><span style="color:#808080;">73A738F6</span></div><div class="a m" style="left:304px;top:401px;">8BC8</div><div class="a m" style="left:451px;top:401px;"><span style="color:#000;">mov</span> <span style="color:#008000;">ecx</span><span style="color:#000;">,</span><span style="color:#008000;">eax</span></div><div class="a" style="left:195px;top:414px;width:6px;height:6px;background:#808080;border-radius:50%"></div><div class="a m" style="left:209px;top:412px;"><span style="color:#808080;">73A738F8</span></div><div class="a m" style="left:304px;top:412px;">83E1 03</div><div class="a m" style="left:451px;top:412px;"><span style="color:#000;">and</span> <span style="color:#008000;">ecx</span><span style="color:#000;">,</span><span style="color:#828200;">3</span></div><div class="a" style="left:195px;top:425px;width:6px;height:6px;background:#808080;border-radius:50%"></div><div class="a m" style="left:209px;top:423px;"><span style="color:#808080;">73A738FB</span></div><svg class="a" style="left:287px;top:425px" width="7" height="6"><path d="M1 1L3.5 4 6 1" fill="none" stroke="#f00" stroke-width="1.1"/></svg><div class="a m" style="left:304px;top:423px;">74 13</div><div class="a m" style="left:451px;top:423px;"><span style="color:#ff0000;background:#ffff00;display:inline-block;height:10px;margin-top:-1px;padding-top:1px;vertical-align:top;">je</span> <span style="color:#000;background:#ffff00;display:inline-block;height:10px;margin-top:-1px;padding-top:1px;vertical-align:top;">vcruntime140.73A73910</span></div><div class="a" style="left:195px;top:436px;width:6px;height:6px;background:#808080;border-radius:50%"></div><div class="a m" style="left:209px;top:434px;"><span style="color:#808080;">73A738FD</span></div><div class="a m" style="left:304px;top:434px;">8A06</div><div class="a m" style="left:451px;top:434px;"><span style="color:#000;">mov</span> <span style="color:#008000;">al</span><span style="color:#000;">,</span><span style="color:#000080;">byte ptr</span> <span style="color:#ff00ff;">ds</span><span style="color:#000;">:</span><span style="color:#000;">[</span><span style="color:#b03434;">esi</span><span style="color:#000;">]</span></div><div class="a m" style="left:730px;top:434px;"><span style="color:#aa5500;">esi:"B50B8EB70A1EDB3AF00B08C865AB8380"</span></div><div class="a" style="left:195px;top:447px;width:6px;height:6px;background:#808080;border-radius:50%"></div><div class="a m" style="left:209px;top:445px;"><span style="color:#808080;">73A738FF</span></div><div class="a m" style="left:304px;top:445px;">8807</div><div class="a m" style="left:451px;top:445px;"><span style="color:#000;">mov</span> <span style="color:#000080;">byte ptr</span> <span style="color:#ff00ff;">ds</span><span style="color:#000;">:</span><span style="color:#000;">[</span><span style="color:#b03434;">edi</span><span style="color:#000;">]</span><span style="color:#000;">,</span><span style="color:#008000;">al</span></div><div class="a m" style="left:730px;top:445px;"><span style="color:#aa5500;">edi:"B50B8EB70A1EDB3A14440FBF7101DEB0"</span></div><div class="a" style="left:195px;top:458px;width:6px;height:6px;background:#808080;border-radius:50%"></div><div class="a m" style="left:209px;top:456px;"><span style="color:#808080;">73A73901</span></div><div class="a m" style="left:304px;top:456px;">46</div><div class="a m" style="left:451px;top:456px;"><span style="color:#000;">inc</span> <span style="color:#008000;">esi</span></div><div class="a m" style="left:730px;top:456px;"><span style="color:#aa5500;">esi:"B50B8EB70A1EDB3AF00B08C865AB8380"</span></div><div class="a" style="left:195px;top:469px;width:6px;height:6px;background:#808080;border-radius:50%"></div><div class="a m" style="left:209px;top:467px;"><span style="color:#808080;">73A73902</span></div><div class="a m" style="left:304px;top:467px;">47</div><div class="a m" style="left:451px;top:467px;"><span style="color:#000;">inc</span> <span style="color:#008000;">edi</span></div><div class="a m" style="left:730px;top:467px;"><span style="color:#aa5500;">edi:"B50B8EB70A1EDB3A14440FBF7101DEB0"</span></div><div class="a" style="left:195px;top:480px;width:6px;height:6px;background:#808080;border-radius:50%"></div><div class="a m" style="left:209px;top:478px;"><span style="color:#808080;">73A73903</span></div><div class="a m" style="left:304px;top:478px;">49</div><div class="a m" style="left:451px;top:478px;"><span style="color:#000;">dec</span> <span style="color:#008000;">ecx</span></div><div class="a" style="left:195px;top:491px;width:6px;height:6px;background:#808080;border-radius:50%"></div><div class="a m" style="left:209px;top:489px;"><span style="color:#808080;">73A73904</span></div><svg class="a" style="left:287px;top:490px" width="7" height="6"><path d="M1 5L3.5 2 6 5" fill="none" stroke="#f00" stroke-width="1.1"/></svg><div class="a m" style="left:304px;top:489px;">75 F7</div><div class="a m" style="left:451px;top:489px;"><span style="color:#ff0000;background:#ffff00;display:inline-block;height:10px;margin-top:-1px;padding-top:1px;vertical-align:top;">jne</span> <span style="color:#000;background:#ffff00;display:inline-block;height:10px;margin-top:-1px;padding-top:1px;vertical-align:top;">vcruntime140.73A738FD</span></div><div class="a" style="left:195px;top:502px;width:6px;height:6px;background:#808080;border-radius:50%"></div><div class="a m" style="left:209px;top:500px;"><span style="color:#808080;">73A73906</span></div><div class="a m" style="left:304px;top:500px;">8DA424 00000000</div><div class="a m" style="left:451px;top:500px;"><span style="color:#000;">lea</span> <span style="color:#008000;">esp</span><span style="color:#000;">,</span><span style="color:#000080;">dword ptr</span> <span style="color:#ff00ff;">ss</span><span style="color:#000;">:</span><span style="color:#000;background:#00ffff;display:inline-block;height:10px;margin-top:-1px;padding-top:1px;vertical-align:top;">[</span><span style="color:#b03434;">esp</span><span style="color:#000;background:#00ffff;display:inline-block;height:10px;margin-top:-1px;padding-top:1px;vertical-align:top;">]</span></div><div class="a m" style="left:730px;top:500px;"><span style="color:#aa5500;">[esp]:&amp;"B50B8EB70A1EDB3A14440FBF7101DEB0"</span></div><div class="a" style="left:195px;top:513px;width:6px;height:6px;background:#808080;border-radius:50%"></div><div class="a m" style="left:209px;top:511px;"><span style="color:#808080;">73A7390D</span></div><div class="a m" style="left:304px;top:511px;">8D49 00</div><div class="a m" style="left:451px;top:511px;"><span style="color:#000;">lea</span> <span style="color:#008000;">ecx</span><span style="color:#000;">,</span><span style="color:#000080;">dword ptr</span> <span style="color:#ff00ff;">ds</span><span style="color:#000;">:</span><span style="color:#000;">[</span><span style="color:#b03434;">ecx</span><span style="color:#000;">]</span></div><div class="a" style="left:195px;top:524px;width:6px;height:6px;background:#808080;border-radius:50%"></div><div class="a m" style="left:209px;top:522px;"><span style="color:#808080;">73A73910</span></div><div class="a m" style="left:304px;top:522px;">8B4424 0C</div><div class="a m" style="left:451px;top:522px;"><span style="color:#000;">mov</span> <span style="color:#008000;">eax</span><span style="color:#000;">,</span><span style="color:#000080;">dword ptr</span> <span style="color:#ff00ff;">ss</span><span style="color:#000;">:</span><span style="color:#000;background:#00ffff;display:inline-block;height:10px;margin-top:-1px;padding-top:1px;vertical-align:top;">[</span><span style="color:#b03434;">esp</span><span style="color:#f27711;">+</span><span style="color:#828200;">C</span><span style="color:#000;background:#00ffff;display:inline-block;height:10px;margin-top:-1px;padding-top:1px;vertical-align:top;">]</span></div><div class="a m" style="left:730px;top:522px;"><span style="color:#aa5500;">[esp+0C]:"B50B8EB70A1EDB3A14440FBF7101DEB0"</span></div><div class="a" style="left:195px;top:535px;width:6px;height:6px;background:#808080;border-radius:50%"></div><div class="a m" style="left:209px;top:533px;"><span style="color:#808080;">73A73914</span></div><div class="a m" style="left:304px;top:533px;">5E</div><div class="a m" style="left:451px;top:533px;"><span style="color:#0000ff;">pop</span> <span style="color:#008000;">esi</span></div><div class="a m" style="left:730px;top:533px;"><span style="color:#aa5500;">esi:"B50B8EB70A1EDB3AF00B08C865AB8380"</span></div><div class="a" style="left:195px;top:546px;width:6px;height:6px;background:#808080;border-radius:50%"></div><div class="a m" style="left:209px;top:544px;"><span style="color:#808080;">73A73915</span></div><div class="a m" style="left:304px;top:544px;">5F</div><div class="a m" style="left:451px;top:544px;"><span style="color:#0000ff;">pop</span> <span style="color:#008000;">edi</span></div><div class="a m" style="left:730px;top:544px;"><span style="color:#aa5500;">edi:"B50B8EB70A1EDB3A14440FBF7101DEB0"</span></div><div class="a" style="left:195px;top:557px;width:6px;height:6px;background:#808080;border-radius:50%"></div><div class="a m" style="left:209px;top:555px;"><span style="color:#808080;">73A73916</span></div><div class="a m" style="left:304px;top:555px;">C3</div><div class="a m" style="left:451px;top:555px;"><span style="color:#000;background:#00ffff;display:inline-block;height:10px;margin-top:-1px;padding-top:1px;vertical-align:top;">ret</span></div><div class="a" style="left:195px;top:568px;width:6px;height:6px;background:#808080;border-radius:50%"></div><div class="a m" style="left:209px;top:566px;"><span style="color:#808080;">73A73917</span></div><div class="a m" style="left:304px;top:566px;">8DA424 00000000</div><div class="a m" style="left:451px;top:566px;"><span style="color:#000;">lea</span> <span style="color:#008000;">esp</span><span style="color:#000;">,</span><span style="color:#000080;">dword ptr</span> <span style="color:#ff00ff;">ss</span><span style="color:#000;">:</span><span style="color:#000;background:#00ffff;display:inline-block;height:10px;margin-top:-1px;padding-top:1px;vertical-align:top;">[</span><span style="color:#b03434;">esp</span><span style="color:#000;background:#00ffff;display:inline-block;height:10px;margin-top:-1px;padding-top:1px;vertical-align:top;">]</span></div><div class="a m" style="left:730px;top:566px;"><span style="color:#aa5500;">[esp]:&amp;"B50B8EB70A1EDB3A14440FBF7101DEB0"</span></div><div class="a" style="left:195px;top:579px;width:6px;height:6px;background:#808080;border-radius:50%"></div><div class="a m" style="left:209px;top:577px;"><span style="color:#808080;">73A7391E</span></div><div class="a m" style="left:304px;top:577px;">8BFF</div><div class="a m" style="left:451px;top:577px;"><span style="color:#808080;">mov edi,edi</span></div><div class="a" style="left:195px;top:590px;width:6px;height:6px;background:#808080;border-radius:50%"></div><div class="a m" style="left:209px;top:588px;"><span style="color:#808080;">73A73920</span></div><div class="a m" style="left:304px;top:588px;">BA 10000000</div><div class="a m" style="left:451px;top:588px;"><span style="color:#000;">mov</span> <span style="color:#008000;">edx</span><span style="color:#000;">,</span><span style="color:#828200;">10</span></div><div class="a" style="left:195px;top:601px;width:6px;height:6px;background:#808080;border-radius:50%"></div><div class="a m" style="left:209px;top:599px;"><span style="color:#808080;">73A73925</span></div><div class="a m" style="left:304px;top:599px;">2BD0</div><div class="a m" style="left:451px;top:599px;"><span style="color:#000;">sub</span> <span style="color:#008000;">edx</span><span style="color:#000;">,</span><span style="color:#008000;">eax</span></div><div class="a" style="left:195px;top:612px;width:6px;height:6px;background:#808080;border-radius:50%"></div><div class="a m" style="left:209px;top:610px;"><span style="color:#808080;">73A73927</span></div><div class="a m" style="left:304px;top:610px;">2BCA</div><div class="a m" style="left:451px;top:610px;"><span style="color:#000;">sub</span> <span style="color:#008000;">ecx</span><span style="color:#000;">,</span><span style="color:#008000;">edx</span></div><div class="a" style="left:195px;top:623px;width:6px;height:6px;background:#808080;border-radius:50%"></div><div class="a m" style="left:209px;top:621px;"><span style="color:#808080;">73A73929</span></div><div class="a m" style="left:304px;top:621px;">51</div><div class="a m" style="left:451px;top:621px;"><span style="color:#0000ff;">push</span> <span style="color:#008000;">ecx</span></div><div class="a" style="left:195px;top:634px;width:6px;height:6px;background:#808080;border-radius:50%"></div><div class="a m" style="left:209px;top:632px;"><span style="color:#808080;">73A7392A</span></div><div class="a m" style="left:304px;top:632px;">8BC2</div><div class="a m" style="left:451px;top:632px;"><span style="color:#000;">mov</span> <span style="color:#008000;">eax</span><span style="color:#000;">,</span><span style="color:#008000;">edx</span></div><div class="a" style="left:195px;top:645px;width:6px;height:6px;background:#808080;border-radius:50%"></div><div class="a m" style="left:209px;top:643px;"><span style="color:#808080;">73A7392C</span></div><div class="a m" style="left:304px;top:643px;">8BC8</div><div class="a m" style="left:451px;top:643px;"><span style="color:#000;">mov</span> <span style="color:#008000;">ecx</span><span style="color:#000;">,</span><span style="color:#008000;">eax</span></div><div class="a" style="left:195px;top:656px;width:6px;height:6px;background:#808080;border-radius:50%"></div><div class="a m" style="left:209px;top:654px;"><span style="color:#808080;">73A7392E</span></div><div class="a m" style="left:304px;top:654px;">83E1 03</div><div class="a m" style="left:451px;top:654px;"><span style="color:#000;">and</span> <span style="color:#008000;">ecx</span><span style="color:#000;">,</span><span style="color:#828200;">3</span></div><div class="a" style="left:195px;top:667px;width:6px;height:6px;background:#808080;border-radius:50%"></div><div class="a m" style="left:209px;top:665px;"><span style="color:#808080;">73A73931</span></div><svg class="a" style="left:287px;top:667px" width="7" height="6"><path d="M1 1L3.5 4 6 1" fill="none" stroke="#f00" stroke-width="1.1"/></svg><div class="a m" style="left:304px;top:665px;">74 08</div><div class="a m" style="left:451px;top:665px;"><span style="color:#ff0000;background:#ffff00;display:inline-block;height:10px;margin-top:-1px;padding-top:1px;vertical-align:top;">je</span> <span style="color:#000;background:#ffff00;display:inline-block;height:10px;margin-top:-1px;padding-top:1px;vertical-align:top;">vcruntime140.73A7393B</span></div><div class="a" style="left:206px;top:665px;width:1317px;height:1px;background:#000"></div><svg class="a" style="left:0;top:0" width="205" height="665"><path d="M167.5 92V108.5" stroke="#ffa500" stroke-width="1.2" stroke-dasharray="4 2"/><path d="M167.5 108.5H193" stroke="#ffa500" stroke-width="1.2" stroke-dasharray="4 2"/><path d="M164.0 96.5L167.5 93L171.0 96.5" fill="none" stroke="#ffa500" stroke-width="1.2"/><path d="M134.5 130.5V526.5" stroke="#00bfff" stroke-width="1.2" stroke-dasharray="4 2"/><path d="M134.5 130.5H193" stroke="#00bfff" stroke-width="1.2" stroke-dasharray="4 2"/><path d="M156.5 174.5V284.5" stroke="#00bfff" stroke-width="1.2" stroke-dasharray="4 2"/><path d="M156.5 174.5H193" stroke="#00bfff" stroke-width="1.2" stroke-dasharray="4 2"/><path d="M156.5 284.5H193" stroke="#00bfff" stroke-width="1.2" stroke-dasharray="4 2"/><path d="M188.5 281.0L192.5 284.5L188.5 288.0" fill="none" stroke="#00bfff" stroke-width="1.2"/><path d="M167.5 196.5V273.5" stroke="#ffa500" stroke-width="1.2" stroke-dasharray="4 2"/><path d="M167.5 273.5H193" stroke="#ffa500" stroke-width="1.2" stroke-dasharray="4 2"/><path d="M167.5 196.5H193" stroke="#ffa500" stroke-width="1.2" stroke-dasharray="4 2"/><path d="M188.5 193.0L192.5 196.5L188.5 200.0" fill="none" stroke="#ffa500" stroke-width="1.2"/><path d="M145.5 295.5V526.5" stroke="#00bfff" stroke-width="1.2" stroke-dasharray="4 2"/><path d="M145.5 295.5H193" stroke="#00bfff" stroke-width="1.2" stroke-dasharray="4 2"/><path d="M156.5 328.5V405.5" stroke="#00bfff" stroke-width="1.2" stroke-dasharray="4 2"/><path d="M156.5 328.5H193" stroke="#00bfff" stroke-width="1.2" stroke-dasharray="4 2"/><path d="M156.5 405.5H193" stroke="#00bfff" stroke-width="1.2" stroke-dasharray="4 2"/><path d="M188.5 402.0L192.5 405.5L188.5 409.0" fill="none" stroke="#00bfff" stroke-width="1.2"/><path d="M167.5 339.5V394.5" stroke="#ffa500" stroke-width="1.2" stroke-dasharray="4 2"/><path d="M167.5 394.5H193" stroke="#ffa500" stroke-width="1.2" stroke-dasharray="4 2"/><path d="M167.5 339.5H193" stroke="#ffa500" stroke-width="1.2" stroke-dasharray="4 2"/><path d="M188.5 336.0L192.5 339.5L188.5 343.0" fill="none" stroke="#ffa500" stroke-width="1.2"/><path d="M156.5 427.5V526.5" stroke="#00bfff" stroke-width="1.2" stroke-dasharray="4 2"/><path d="M156.5 427.5H193" stroke="#00bfff" stroke-width="1.2" stroke-dasharray="4 2"/><path d="M167.5 438.5V493.5" stroke="#ffa500" stroke-width="1.2" stroke-dasharray="4 2"/><path d="M167.5 493.5H193" stroke="#ffa500" stroke-width="1.2" stroke-dasharray="4 2"/><path d="M167.5 438.5H193" stroke="#ffa500" stroke-width="1.2" stroke-dasharray="4 2"/><path d="M188.5 435.0L192.5 438.5L188.5 442.0" fill="none" stroke="#ffa500" stroke-width="1.2"/><path d="M134.5 526.5H193" stroke="#00bfff" stroke-width="1.2"/><path d="M188.5 523.0L192.5 526.5L188.5 530.0" fill="none" stroke="#00bfff" stroke-width="1.2"/><path d="M24 229H191" stroke="#3030ff" stroke-width="2"/><path d="M185.5 224.5L191.5 229L185.5 233.5" fill="none" stroke="#3030ff" stroke-width="2"/></svg><div class="a" style="left:2px;top:224px;width:22px;height:11px;background:#3030ff"></div><div class="a m" style="left:3px;top:224px;color:#fff">EIP</div><div class="a" style="left:1525px;top:92px;width:394px;height:21px;background:#fdfdfd;border:1px solid #cfcfcf;border-radius:4px;box-sizing:border-box"></div><div class="a s" style="left:1700px;top:95px;font-size:12px;line-height:14px;color:#000">隐藏</div><div class="a m" style="left:1724px;top:96px;font-size:11.665px;line-height:13px;color:#000">FPU</div><div class="a" style="left:1524px;top:114px;width:379px;height:449px;background:#fff8f0"></div><div class="a" style="left:1524px;top:114px;width:379px;height:1px;background:#8a9099"></div><div class="a" style="left:1524px;top:114px;width:1px;height:449px;background:#8a9099"></div><div class="a" style="left:1903px;top:114px;width:17px;height:449px;background:#f0f0f0"></div><div class="a" style="left:1911px;top:131px;width:2px;height:190px;background:#808080"></div><div class="a m" style="left:1532px;top:121px;">EAX   <span style="color:#ff0000;">1F819AC8</span></div><div class="a m" style="left:1532px;top:133px;">EBX   <span style="color:#ff0000;">1F7B8770</span>     "B50B8EB70A1EDB3A14440FBF7101DEB0"</div><div class="a m" style="left:1532px;top:145px;">ECX   <span style="color:#ff0000;">00000020</span>     ' '</div><div class="a m" style="left:1532px;top:157px;">EDX   <span style="color:#ff0000;">00000001</span></div><div class="a m" style="left:1532px;top:169px;">EBP   <span style="color:#ff0000;">0075F6A8</span>     &amp;"璿u"</div><div class="a m" style="left:1532px;top:181px;">ESP   <span style="color:#ff0000;">0075F680</span></div><div class="a m" style="left:1532px;top:193px;">ESI   <span style="color:#ff0000;">1F819AA8</span>     "B50B8EB70A1EDB3AF00B08C865AB8380"</div><div class="a m" style="left:1532px;top:205px;">EDI   <span style="color:#ff0000;">1F7B8770</span>     "B50B8EB70A1EDB3A14440FBF7101DEB0"</div><div class="a" style="left:1532px;top:215px;width:21px;height:1px;background:#00a000"></div><div class="a m" style="left:1532px;top:229px;">EIP   <span style="color:#ff0000;background:#ebebeb;display:inline-block;height:10px;margin-top:-1px;padding-top:1px;vertical-align:top;">73A738CD</span>     vcruntime140.73A738CD</div><div class="a m" style="left:1532px;top:253px;">EFLAGS   <span style="color:#ff0000;">00200300</span></div><div class="a m" style="left:1532px;top:265px;">ZF 0  PF 0  AF <span style="color:#ff0000;">0</span></div><div class="a m" style="left:1532px;top:277px;">OF 0  SF 0  DF 0</div><div class="a m" style="left:1532px;top:289px;">CF 0  TF <span style="color:#ff0000;">1</span>  IF 1</div><div class="a m" style="left:1532px;top:313px;">LastError  00000000 (ERROR_SUCCESS)</div><div class="a m" style="left:1532px;top:325px;">LastStatus <span style="color:#ff0000;">C0000033 (STATUS_OBJECT_NAME_INVALID)</span></div><div class="a m" style="left:1532px;top:349px;">GS 002B  FS 0053</div><div class="a m" style="left:1532px;top:361px;">ES 002B  DS 002B</div><div class="a m" style="left:1532px;top:373px;">CS 0023  SS 002B</div><div class="a" style="left:1595px;top:371px;width:14px;height:1px;background:#00a000"></div><div class="a m" style="left:1532px;top:397px;">ST(0) <span style="color:#ff0000;">FFFF0000000002020100</span> x87r0 空 <span style="color:#ff0000;">invalid</span></div><div class="a m" style="left:1532px;top:409px;">ST(1) <span style="color:#ff0000;">FFFF0000000000000000</span> x87r1 空 <span style="color:#ff0000;">invalid</span></div><div class="a m" style="left:1532px;top:421px;">ST(2) <span style="color:#ff0000;">FFFF0080008000800080</span> x87r2 空 <span style="color:#ff0000;">invalid</span></div><div class="a m" style="left:1532px;top:433px;">ST(3) <span style="color:#ff0000;">FFFF0080008000800080</span> x87r3 空 <span style="color:#ff0000;">invalid</span></div><div class="a m" style="left:1532px;top:445px;">ST(4) <span style="color:#ff0000;">FFFF0000000002020100</span> x87r4 空 <span style="color:#ff0000;">invalid</span></div><div class="a m" style="left:1532px;top:457px;">ST(5) <span style="color:#ff0000;">FFFF0000000000000000</span> x87r5 空 <span style="color:#ff0000;">invalid</span></div><div class="a m" style="left:1532px;top:469px;">ST(6) <span style="color:#ff0000;">FFFF0000000000000000</span> x87r6 空 <span style="color:#ff0000;">invalid</span></div><div class="a m" style="left:1532px;top:481px;">ST(7) <span style="color:#ff0000;">4007D200000000000000</span> x87r7 空 <span style="color:#ff0000;">420.000000000000000000</span></div><div class="a m" style="left:1532px;top:505px;">x87TagWord FFFF</div><div class="a m" style="left:1532px;top:517px;">x87TW_0 3 (空)      x87TW_1 3 (空)</div><div class="a m" style="left:1532px;top:529px;">x87TW_2 3 (空)      x87TW_3 3 (空)</div><div class="a m" style="left:1532px;top:541px;">x87TW_4 3 (空)      x87TW_5 3 (空)</div><div class="a m" style="left:1532px;top:553px;">x87TW_6 3 (空)      x87TW_7 3 (空)</div><div class="a" style="left:1903px;top:114px;width:17px;height:449px;background:#f0f0f0"></div><div class="a" style="left:1911px;top:131px;width:2px;height:190px;background:#808080"></div><div class="a" style="left:1524px;top:563px;width:396px;height:17px;background:#f0f0f0"></div><div class="a" style="left:1541px;top:570px;width:130px;height:3px;background:#8a8a8a;border-radius:1px"></div><div class="a" style="left:1525px;top:580px;width:285px;height:19px;background:#fdfdfd;border:1px solid #d0d0d0;border-radius:4px;box-sizing:border-box"></div><div class="a s" style="left:1528px;top:583px;font-size:12px;line-height:14px;color:#000">默认 (stdcall)</div><svg class="a" style="left:1797px;top:588px" width="8" height="5"><path d="M0 0h7.5L3.75 4.5z" fill="#111"/></svg><div class="a" style="left:1814px;top:582px;width:36px;height:17px;background:#fff;border-bottom:1px solid #a8a8a8;box-sizing:border-box"></div><div class="a s" style="left:1816px;top:583px;font-size:12px;line-height:14px;color:#000">5</div><div class="a" style="left:1836px;top:583px;width:13px;height:15px;background:#f4f4f4;border:1px solid #e0e0e0;box-sizing:border-box"></div><svg class="a" style="left:1838px;top:584px" width="9" height="14"><path d="M1 5L4.5 1.5 8 5z M1 8.5l3.5 3.5 3.5-3.5z" fill="#111"/></svg><div class="a" style="left:1854px;top:583px;width:13px;height:13px;background:#fff;border:1px solid #666;border-radius:3px;box-sizing:border-box"></div><div class="a s" style="left:1872px;top:583px;font-size:12px;line-height:14px;color:#000">解锁</div><div class="a" style="left:1524px;top:600px;width:396px;height:117px;background:#fff8f0"></div><div class="a" style="left:1524px;top:600px;width:396px;height:1px;background:#8a9099"></div><div class="a" style="left:1524px;top:600px;width:1px;height:117px;background:#8a9099"></div><div class="a" style="left:1526px;top:601px;width:376px;height:11px;background:#c0c0c0"></div><div class="a m" style="left:1529px;top:602px;">1: [esp+4] 00000020 00000020</div><div class="a m" style="left:1529px;top:613px;">2: [esp+8] 00FB5D52 wxwork.00FB5D52</div><div class="a m" style="left:1529px;top:624px;">3: [esp+C] 1F7B8770 1F7B8770 "B50B8EB70A1EDB3A14440FB</div><div class="a m" style="left:1529px;top:635px;">4: [esp+10] 1F819AA8 1F819AA8 "B50B8EB70A1EDB3AF00B08C</div><div class="a m" style="left:1529px;top:646px;">5: [esp+14] 00000020 00000020</div><div class="a" style="left:1902px;top:601px;width:18px;height:115px;background:#f0f0f0"></div><svg class="a" style="left:1905px;top:604px" width="12" height="110"><path d="M2 8L6 3 10 8z" fill="#a0a0a0"/><path d="M2 102L6 107 10 102z" fill="#a0a0a0"/></svg><div class="a" style="left:0px;top:666px;width:1523px;height:51px;background:#fff8f0"></div><div class="a" style="left:0px;top:666px;width:1523px;height:1px;background:#8a9099"></div><div class="a" style="left:0px;top:666px;width:1px;height:51px;background:#8a9099"></div><div class="a" style="left:1522px;top:666px;width:1px;height:51px;background:#8a9099"></div><div class="a m" style="left:5px;top:669px;">xmmword ptr ds:[edi+10]=[1F7B8780 "14440FBF7101DEB0"]=31 34 34 34 30 46 42 46 37 31 30 31 44 45 42 30</div><div class="a m" style="left:5px;top:680px;">xmm1=46 30 30 42 30 38 43 38 36 35 41 42 38 33 38 30</div><div class="a m" style="left:5px;top:691px;"></div><div class="a m" style="left:5px;top:702px;">.text:73A738CD vcruntime140.dll:$38CD #2CCD</div><div class="a" style="left:0px;top:716px;width:1920px;height:1px;background:#8a9099"></div><div class="a" style="left:0px;top:717px;width:1163px;height:25px;background:#f0f0f0"></div><div class="a" style="left:0px;top:717px;width:81px;height:25px;background:#f9f9f9"></div><div class="a" style="left:81px;top:720px;width:1px;height:22px;background:#dedede"></div><div class="a" style="left:159px;top:720px;width:1px;height:22px;background:#dedede"></div><div class="a" style="left:239px;top:720px;width:1px;height:22px;background:#dedede"></div><div class="a" style="left:320px;top:720px;width:1px;height:22px;background:#dedede"></div><div class="a" style="left:400px;top:720px;width:1px;height:22px;background:#dedede"></div><div class="a" style="left:480px;top:720px;width:1px;height:22px;background:#dedede"></div><div class="a" style="left:571px;top:720px;width:1px;height:22px;background:#dedede"></div><div class="a" style="left:649px;top:720px;width:1px;height:22px;background:#dedede"></div><svg class="a" style="left:12px;top:722px" width="17" height="16" viewBox="0 0 17 16"><rect x="4" y="2" width="11" height="10" rx="2" fill="#d8dde0" stroke="#9aa" stroke-width="0.6"/><path d="M7 3v8M10 3v8M13 3v8" stroke="#aab" stroke-width="0.8"/><rect x="0" y="5" width="4.5" height="7" fill="#f0c020" stroke="#b08000" stroke-width="0.5"/><circle cx="3" cy="13.5" r="1.8" fill="#333"/><circle cx="12" cy="13.5" r="1.8" fill="#333"/></svg><div class="a s" style="left:32px;top:724px;font-size:12px;line-height:14px;color:#000">内存</div><div class="a m" style="left:61px;top:725px;font-size:11px;line-height:13px;color:#000">1</div><svg class="a" style="left:93px;top:722px" width="17" height="16" viewBox="0 0 17 16"><rect x="4" y="2" width="11" height="10" rx="2" fill="#d8dde0" stroke="#9aa" stroke-width="0.6"/><path d="M7 3v8M10 3v8M13 3v8" stroke="#aab" stroke-width="0.8"/><rect x="0" y="5" width="4.5" height="7" fill="#f0c020" stroke="#b08000" stroke-width="0.5"/><circle cx="3" cy="13.5" r="1.8" fill="#333"/><circle cx="12" cy="13.5" r="1.8" fill="#333"/></svg><div class="a s" style="left:113px;top:724px;font-size:12px;line-height:14px;color:#000">内存</div><div class="a m" style="left:142px;top:725px;font-size:11px;line-height:13px;color:#000">2</div><svg class="a" style="left:171px;top:722px" width="17" height="16" viewBox="0 0 17 16"><rect x="4" y="2" width="11" height="10" rx="2" fill="#d8dde0" stroke="#9aa" stroke-width="0.6"/><path d="M7 3v8M10 3v8M13 3v8" stroke="#aab" stroke-width="0.8"/><rect x="0" y="5" width="4.5" height="7" fill="#f0c020" stroke="#b08000" stroke-width="0.5"/><circle cx="3" cy="13.5" r="1.8" fill="#333"/><circle cx="12" cy="13.5" r="1.8" fill="#333"/></svg><div class="a s" style="left:191px;top:724px;font-size:12px;line-height:14px;color:#000">内存</div><div class="a m" style="left:220px;top:725px;font-size:11px;line-height:13px;color:#000">3</div><svg class="a" style="left:251px;top:722px" width="17" height="16" viewBox="0 0 17 16"><rect x="4" y="2" width="11" height="10" rx="2" fill="#d8dde0" stroke="#9aa" stroke-width="0.6"/><path d="M7 3v8M10 3v8M13 3v8" stroke="#aab" stroke-width="0.8"/><rect x="0" y="5" width="4.5" height="7" fill="#f0c020" stroke="#b08000" stroke-width="0.5"/><circle cx="3" cy="13.5" r="1.8" fill="#333"/><circle cx="12" cy="13.5" r="1.8" fill="#333"/></svg><div class="a s" style="left:271px;top:724px;font-size:12px;line-height:14px;color:#000">内存</div><div class="a m" style="left:300px;top:725px;font-size:11px;line-height:13px;color:#000">4</div><svg class="a" style="left:332px;top:722px" width="17" height="16" viewBox="0 0 17 16"><rect x="4" y="2" width="11" height="10" rx="2" fill="#d8dde0" stroke="#9aa" stroke-width="0.6"/><path d="M7 3v8M10 3v8M13 3v8" stroke="#aab" stroke-width="0.8"/><rect x="0" y="5" width="4.5" height="7" fill="#f0c020" stroke="#b08000" stroke-width="0.5"/><circle cx="3" cy="13.5" r="1.8" fill="#333"/><circle cx="12" cy="13.5" r="1.8" fill="#333"/></svg><div class="a s" style="left:352px;top:724px;font-size:12px;line-height:14px;color:#000">内存</div><div class="a m" style="left:381px;top:725px;font-size:11px;line-height:13px;color:#000">5</div><svg class="a" style="left:413px;top:722px" width="17" height="16" viewBox="0 0 17 16"><circle cx="8" cy="9" r="7" fill="#d89048"/><circle cx="5.5" cy="8" r="1.2" fill="#222"/><circle cx="10.5" cy="8" r="1.2" fill="#222"/><ellipse cx="8" cy="12" rx="3" ry="2" fill="#f8e0c0"/></svg><div class="a s" style="left:432px;top:724px;font-size:12px;line-height:14px;color:#000">监视</div><div class="a m" style="left:461px;top:725px;font-size:11px;line-height:13px;color:#000">1</div><svg class="a" style="left:490px;top:722px" width="22" height="16" viewBox="0 0 22 16"><text x="0" y="12" font-family="Liberation Serif" font-style="italic" font-size="10" fill="#802020">[x=]</text></svg><div class="a s" style="left:512px;top:724px;font-size:12px;line-height:14px;color:#000">局部变量</div><svg class="a" style="left:581px;top:722px" width="17" height="16" viewBox="0 0 17 16"><circle cx="3" cy="3" r="2" fill="none" stroke="#3070d0" stroke-width="1"/><path d="M3 5v7h6M3 8h6" fill="none" stroke="#888" stroke-width="0.9"/><rect x="9" y="6" width="4" height="3" fill="#fff" stroke="#888" stroke-width="0.7"/><rect x="9" y="11" width="4" height="3" fill="#fff" stroke="#888" stroke-width="0.7"/></svg><div class="a s" style="left:603px;top:724px;font-size:12px;line-height:14px;color:#000">结构体</div><div class="a" style="left:0px;top:742px;width:1163px;height:244px;background:#fff8f0"></div><div class="a" style="left:0px;top:742px;width:1143px;height:15px;background:#c0c0c0"></div><div class="a" style="left:0px;top:742px;width:1143px;height:1px;background:#8a9099"></div><div class="a" style="left:0px;top:755px;width:1143px;height:2px;background:#7c7c7c"></div><div class="a" style="left:0px;top:742px;width:1px;height:244px;background:#8a9099"></div><div class="a" style="left:63px;top:742px;width:2px;height:15px;background:#8a8a8a"></div><div class="a" style="left:63px;top:757px;width:1px;height:228px;background:#808080"></div><div class="a" style="left:127px;top:742px;width:2px;height:15px;background:#8a8a8a"></div><div class="a" style="left:127px;top:757px;width:1px;height:228px;background:#808080"></div><div class="a" style="left:163px;top:742px;width:2px;height:15px;background:#8a8a8a"></div><div class="a" style="left:163px;top:757px;width:1px;height:228px;background:#808080"></div><div class="a s" style="left:5px;top:743px;font-size:12px;line-height:14px;color:#000">地址</div><div class="a s" style="left:69px;top:743px;font-size:12px;line-height:14px;color:#000">值</div><div class="a m" style="left:133px;top:746px;font-size:10px;line-height:11px;color:#000;letter-spacing:0.75px">ASCI</div><div class="a s" style="left:170px;top:743px;font-size:12px;line-height:14px;color:#000">注释</div><div class="a" style="left:65px;top:758px;width:62px;height:11px;background:#c0c0c0"></div><div class="a" style="left:133px;top:758px;width:28px;height:11px;background:#c0c0c0"></div><div class="a m" style="left:5px;top:759px;">1F7B8770</div><div class="a m" style="left:70px;top:759px;">42303542</div><div class="a m" style="left:133px;top:759px;"><span style="color:#800080;">B</span><span style="color:#800080;">5</span><span style="color:#800080;">0</span><span style="color:#800080;">B</span></div><div class="a m" style="left:5px;top:770px;">1F7B8774</div><div class="a m" style="left:70px;top:770px;">37424538</div><div class="a m" style="left:133px;top:770px;"><span style="color:#800080;">8</span><span style="color:#800080;">E</span><span style="color:#800080;">B</span><span style="color:#800080;">7</span></div><div class="a m" style="left:5px;top:781px;">1F7B8778</div><div class="a m" style="left:70px;top:781px;">45314130</div><div class="a m" style="left:133px;top:781px;"><span style="color:#800080;">0</span><span style="color:#800080;">A</span><span style="color:#800080;">1</span><span style="color:#800080;">E</span></div><div class="a m" style="left:5px;top:792px;">1F7B877C</div><div class="a m" style="left:70px;top:792px;">41334244</div><div class="a m" style="left:133px;top:792px;"><span style="color:#800080;">D</span><span style="color:#800080;">B</span><span style="color:#800080;">3</span><span style="color:#800080;">A</span></div><div class="a m" style="left:5px;top:803px;">1F7B8780</div><div class="a m" style="left:70px;top:803px;">34343431</div><div class="a m" style="left:133px;top:803px;"><span style="color:#800080;">1</span><span style="color:#800080;">4</span><span style="color:#800080;">4</span><span style="color:#800080;">4</span></div><div class="a m" style="left:5px;top:814px;">1F7B8784</div><div class="a m" style="left:70px;top:814px;">46424630</div><div class="a m" style="left:133px;top:814px;"><span style="color:#800080;">0</span><span style="color:#800080;">F</span><span style="color:#800080;">B</span><span style="color:#800080;">F</span></div><div class="a m" style="left:5px;top:825px;">1F7B8788</div><div class="a m" style="left:70px;top:825px;">31303137</div><div class="a m" style="left:133px;top:825px;"><span style="color:#800080;">7</span><span style="color:#800080;">1</span><span style="color:#800080;">0</span><span style="color:#800080;">1</span></div><div class="a m" style="left:5px;top:836px;">1F7B878C</div><div class="a m" style="left:70px;top:836px;">30424544</div><div class="a m" style="left:133px;top:836px;"><span style="color:#800080;">D</span><span style="color:#800080;">E</span><span style="color:#800080;">B</span><span style="color:#800080;">0</span></div><div class="a m" style="left:5px;top:847px;">1F7B8790</div><div class="a m" style="left:70px;top:847px;">00000000</div><div class="a m" style="left:133px;top:847px;"><span style="color:#008000;">.</span><span style="color:#008000;">.</span><span style="color:#008000;">.</span><span style="color:#008000;">.</span></div><div class="a m" style="left:5px;top:858px;">1F7B8794</div><div class="a m" style="left:70px;top:858px;">00000000</div><div class="a m" style="left:133px;top:858px;"><span style="color:#008000;">.</span><span style="color:#008000;">.</span><span style="color:#008000;">.</span><span style="color:#008000;">.</span></div><div class="a m" style="left:5px;top:869px;">1F7B8798</div><div class="a m" style="left:70px;top:869px;">00000000</div><div class="a m" style="left:133px;top:869px;"><span style="color:#008000;">.</span><span style="color:#008000;">.</span><span style="color:#008000;">.</span><span style="color:#008000;">.</span></div><div class="a m" style="left:5px;top:880px;">1F7B879C</div><div class="a m" style="left:70px;top:880px;">00000000</div><div class="a m" style="left:133px;top:880px;"><span style="color:#008000;">.</span><span style="color:#008000;">.</span><span style="color:#008000;">.</span><span style="color:#008000;">.</span></div><div class="a m" style="left:5px;top:891px;">1F7B87A0</div><div class="a m" style="left:70px;top:891px;">7B7C366B</div><div class="a m" style="left:133px;top:891px;"><span style="color:#800080;">k</span><span style="color:#800080;">6</span><span style="color:#800080;">|</span><span style="color:#800080;">{</span></div><div class="a m" style="left:5px;top:902px;">1F7B87A4</div><div class="a m" style="left:70px;top:902px;">8C00D700</div><div class="a m" style="left:133px;top:902px;"><span style="color:#008000;">.</span><span style="color:#000;">×</span><span style="color:#008000;">.</span><span style="color:#000;">.</span></div><div class="a m" style="left:5px;top:913px;">1F7B87A8</div><div class="a m" style="left:70px;top:913px;">1240A344</div><div class="a m" style="left:133px;top:913px;"><span style="color:#800080;">D</span><span style="color:#000;">£</span><span style="color:#800080;">@</span><span style="color:#000;">.</span></div><div class="a m" style="left:5px;top:924px;">1F7B87AC</div><div class="a m" style="left:70px;top:924px;">1240A344</div><div class="a m" style="left:133px;top:924px;"><span style="color:#800080;">D</span><span style="color:#000;">£</span><span style="color:#800080;">@</span><span style="color:#000;">.</span></div><div class="a m" style="left:5px;top:935px;">1F7B87B0</div><div class="a m" style="left:70px;top:935px;">00000000</div><div class="a m" style="left:133px;top:935px;"><span style="color:#008000;">.</span><span style="color:#008000;">.</span><span style="color:#008000;">.</span><span style="color:#008000;">.</span></div><div class="a m" style="left:5px;top:946px;">1F7B87B4</div><div class="a m" style="left:70px;top:946px;">00000001</div><div class="a m" style="left:133px;top:946px;"><span style="color:#000;">.</span><span style="color:#008000;">.</span><span style="color:#008000;">.</span><span style="color:#008000;">.</span></div><div class="a m" style="left:5px;top:957px;">1F7B87B8</div><div class="a m" style="left:70px;top:957px;">00000000</div><div class="a m" style="left:133px;top:957px;"><span style="color:#008000;">.</span><span style="color:#008000;">.</span><span style="color:#008000;">.</span><span style="color:#008000;">.</span></div><div class="a m" style="left:5px;top:968px;">1F7B87BC</div><div class="a m" style="left:70px;top:968px;">00000001</div><div class="a m" style="left:133px;top:968px;"><span style="color:#000;">.</span><span style="color:#008000;">.</span><span style="color:#008000;">.</span><span style="color:#008000;">.</span></div><div class="a m" style="left:5px;top:979px;">1F7B87C0</div><div class="a m" style="left:70px;top:979px;">1F89DC68</div><div class="a m" style="left:133px;top:979px;"><span style="color:#800080;">h</span><span style="color:#000;">Ü</span><span style="color:#000;">.</span><span style="color:#000;">.</span></div><div class="a" style="left:1143px;top:742px;width:19px;height:244px;background:#f0f0f0"></div><div class="a" style="left:1142px;top:742px;width:2px;height:15px;background:#7c7c7c"></div><div class="a" style="left:1143px;top:757px;width:1px;height:228px;background:#8a9099"></div><div class="a" style="left:1161px;top:742px;width:1px;height:244px;background:#8a9099"></div><div class="a" style="left:1152px;top:813px;width:2px;height:18px;background:#808080"></div><div class="a" style="left:0px;top:985px;width:1163px;height:1px;background:#8a9099"></div><div class="a" style="left:1163px;top:717px;width:757px;height:269px;background:#fff8f0"></div><div class="a" style="left:1163px;top:717px;width:1px;height:269px;background:#8a9099"></div><div class="a" style="left:1163px;top:717px;width:757px;height:1px;background:#8a9099"></div><div class="a" style="left:1226px;top:718px;width:1px;height:249px;background:#808080"></div><div class="a" style="left:1293px;top:718px;width:1px;height:249px;background:#808080"></div><div class="a" style="left:1164px;top:719px;width:62px;height:11px;background:#000"></div><div class="a" style="left:1227px;top:719px;width:675px;height:11px;background:#c0c0c0"></div><div class="a m" style="left:1168px;top:720px;"><span style="color:#fff;">0075F680</span></div><div class="a m" style="left:1232px;top:720px;">124618BC</div><div class="a m" style="left:1298px;top:720px;">&amp;"B50B8EB70A1EDB3A14440FBF7101DEB0"</div><div class="a m" style="left:1168px;top:731px;"><span style="color:#808080;">0075F684</span></div><div class="a m" style="left:1232px;top:731px;">00000020</div><div class="a m" style="left:1168px;top:742px;"><span style="color:#808080;">0075F688</span></div><div class="a m" style="left:1232px;top:742px;">00FB5D52</div><div class="a s" style="left:1298px;top:740px;font-size:11px;line-height:13px;color:#ff0000">返回到</div><div class="a m" style="left:1338px;top:742px;"><span style="color:#ff0000;">wxwork.protected: __thiscall std::_Ptr_base&lt;class Gdiplus::Image&gt;::~_Ptr_base&lt;class Gdiplus::Image&gt;(void)+2</span></div><div class="a m" style="left:1168px;top:753px;"><span style="color:#808080;">0075F68C</span></div><div class="a m" style="left:1232px;top:753px;">1F7B8770</div><div class="a m" style="left:1298px;top:753px;">"B50B8EB70A1EDB3A14440FBF7101DEB0"</div><div class="a m" style="left:1168px;top:764px;"><span style="color:#808080;">0075F690</span></div><div class="a m" style="left:1232px;top:764px;">1F819AA8</div><div class="a m" style="left:1298px;top:764px;">"B50B8EB70A1EDB3AF00B08C865AB8380"</div><div class="a m" style="left:1168px;top:775px;"><span style="color:#808080;">0075F694</span></div><div class="a m" style="left:1232px;top:775px;">00000020</div><div class="a m" style="left:1168px;top:786px;"><span style="color:#808080;">0075F698</span></div><div class="a m" style="left:1232px;top:786px;">12461620</div><div class="a m" style="left:1168px;top:797px;"><span style="color:#808080;">0075F69C</span></div><div class="a m" style="left:1232px;top:797px;">12468108</div><div class="a m" style="left:1168px;top:808px;"><span style="color:#808080;">0075F6A0</span></div><div class="a m" style="left:1232px;top:808px;">124618BC</div><div class="a m" style="left:1298px;top:808px;">&amp;"B50B8EB70A1EDB3A14440FBF7101DEB0"</div><div class="a m" style="left:1168px;top:819px;"><span style="color:#808080;">0075F6A4</span></div><div class="a m" style="left:1232px;top:819px;">124618BC</div><div class="a m" style="left:1298px;top:819px;">&amp;"B50B8EB70A1EDB3A14440FBF7101DEB0"</div><div class="a m" style="left:1168px;top:830px;"><span style="color:#808080;">0075F6A8</span></div><div class="a m" style="left:1232px;top:830px;">0075F6BC</div><div class="a m" style="left:1298px;top:830px;">&amp;"羚u"</div><div class="a m" style="left:1168px;top:841px;"><span style="color:#808080;">0075F6AC</span></div><div class="a m" style="left:1236px;top:841px;">00FB5D96</div><div class="a s" style="left:1298px;top:839px;font-size:11px;line-height:13px;color:#ff0000">返回到</div><div class="a m" style="left:1338px;top:841px;"><span style="color:#ff0000;">wxwork.protected: __thiscall std::_Ptr_base&lt;class Gdiplus::Image&gt;::~_Ptr_base&lt;class Gdiplus::Image&gt;(void)+2</span></div><div class="a m" style="left:1168px;top:852px;"><span style="color:#808080;">0075F6B0</span></div><div class="a m" style="left:1236px;top:852px;">1F819AA8</div><div class="a m" style="left:1298px;top:852px;">"B50B8EB70A1EDB3AF00B08C865AB8380"</div><div class="a m" style="left:1168px;top:863px;"><span style="color:#808080;">0075F6B4</span></div><div class="a m" style="left:1236px;top:863px;">00000020</div><div class="a m" style="left:1168px;top:874px;"><span style="color:#ff0000;">0075F6B8</span></div><div class="a m" style="left:1236px;top:874px;">606034B0</div><div class="a m" style="left:1298px;top:874px;">duilib.public: virtual void __thiscall DuiLib::CGifAnimUI::SetVisible(bool)</div><div class="a m" style="left:1168px;top:885px;"><span style="color:#808080;">0075F6BC</span></div><div class="a m" style="left:1236px;top:885px;">0075F788</div><div class="a m" style="left:1298px;top:885px;">&amp;"各u"</div><div class="a m" style="left:1168px;top:896px;"><span style="color:#808080;">0075F6C0</span></div><div class="a m" style="left:1236px;top:896px;">042899BB</div><div class="a s" style="left:1298px;top:894px;font-size:11px;line-height:13px;color:#ff0000">返回到</div><div class="a m" style="left:1338px;top:896px;"><span style="color:#ff0000;">wxwork.public: void __thiscall boost::serialization::singleton_module::unlock(void)+66234</span></div><div class="a m" style="left:1168px;top:907px;"><span style="color:#808080;">0075F6C4</span></div><div class="a m" style="left:1236px;top:907px;">1FA98C14</div><div class="a m" style="left:1298px;top:907px;">&amp;"B50B8EB70A1EDB3AF00B08C865AB8380"</div><div class="a m" style="left:1168px;top:918px;"><span style="color:#808080;">0075F6C8</span></div><div class="a m" style="left:1236px;top:918px;">68CCC8F4</div><div class="a m" style="left:1298px;top:918px;">ncryptsslp.GetSChannelInterface+12D54</div><div class="a m" style="left:1168px;top:929px;"><span style="color:#808080;">0075F6CC</span></div><div class="a m" style="left:1236px;top:929px;">12461620</div><div class="a m" style="left:1168px;top:940px;"><span style="color:#808080;">0075F6D0</span></div><div class="a m" style="left:1236px;top:940px;">042897A0</div><div class="a m" style="left:1298px;top:940px;">wxwork.public: void __thiscall boost::serialization::singleton_module::unlock(void)+66234</div><div class="a m" style="left:1168px;top:951px;"><span style="color:#808080;">0075F6D4</span></div><div class="a m" style="left:1236px;top:951px;">11805910</div><div class="a m" style="left:1168px;top:962px;"><span style="color:#808080;">0075F6D8</span></div><div class="a m" style="left:1236px;top:962px;">00000000</div><div class="a" style="left:1229px;top:842px;width:2px;height:48px;background:#000"></div><div class="a" style="left:1229px;top:842px;width:5px;height:2px;background:#000"></div><div class="a" style="left:1229px;top:888px;width:5px;height:2px;background:#000"></div><div class="a" style="left:1229px;top:896px;width:2px;height:80px;background:#000"></div><div class="a" style="left:1229px;top:896px;width:5px;height:2px;background:#000"></div><div class="a" style="left:1163px;top:967px;width:757px;height:19px;background:#f0f0f0"></div><div class="a" style="left:1180px;top:975px;width:225px;height:3px;background:#8a8a8a;border-radius:1px"></div><div class="a" style="left:1902px;top:718px;width:18px;height:249px;background:#f0f0f0"></div><div class="a" style="left:1911px;top:929px;width:2px;height:18px;background:#808080"></div><div class="a" style="left:1904px;top:786px;width:16px;height:45px;background:#fff;border:1px solid #e4e4e4;border-radius:3px;box-sizing:border-box"></div><div class="a" style="left:1909px;top:791px;width:4px;height:1px;background:#a0a0a0"></div><div class="a" style="left:1909px;top:793px;width:4px;height:1px;background:#a0a0a0"></div><div class="a" style="left:1909px;top:795px;width:4px;height:1px;background:#a0a0a0"></div><div class="a" style="left:1909px;top:797px;width:4px;height:1px;background:#a0a0a0"></div><div class="a" style="left:1909px;top:799px;width:4px;height:1px;background:#a0a0a0"></div><div class="a" style="left:1909px;top:801px;width:4px;height:1px;background:#a0a0a0"></div><div class="a" style="left:1909px;top:803px;width:4px;height:1px;background:#a0a0a0"></div><div class="a" style="left:1909px;top:805px;width:4px;height:1px;background:#f0a020"></div><div class="a" style="left:1909px;top:810px;width:4px;height:1px;background:#a0a0a0"></div><div class="a" style="left:1909px;top:812px;width:4px;height:1px;background:#a0a0a0"></div><div class="a" style="left:1909px;top:814px;width:4px;height:1px;background:#a0a0a0"></div><div class="a" style="left:1909px;top:816px;width:4px;height:1px;background:#a0a0a0"></div><div class="a" style="left:1909px;top:818px;width:4px;height:1px;background:#a0a0a0"></div><div class="a" style="left:1909px;top:820px;width:4px;height:1px;background:#a0a0a0"></div><div class="a" style="left:1909px;top:822px;width:4px;height:1px;background:#a0a0a0"></div><div class="a" style="left:1909px;top:824px;width:4px;height:1px;background:#60b030"></div><div class="a" style="left:1163px;top:985px;width:757px;height:1px;background:#8a9099"></div><div class="a" style="left:0px;top:986px;width:1920px;height:24px;background:#f0f0f0"></div><div class="a s" style="left:2px;top:990px;font-size:12px;line-height:14px;color:#000">命令:</div><div class="a" style="left:39px;top:989px;width:1809px;height:19px;background:#fff"></div><div class="a" style="left:39px;top:1007px;width:1809px;height:1px;background:#8a8a8a"></div><div class="a s" style="left:41px;top:991px;font-size:11px;line-height:14px;color:#a0a0a0">命令使用逗号分隔（像汇编语言）</div><div class="a m" style="left:202px;top:992px;font-size:11.665px;line-height:13px;color:#a0a0a0">: mov eax, ebx</div><div class="a" style="left:1850px;top:989px;width:67px;height:19px;background:#fff;border:1px solid #d8d8d8;border-radius:3px;box-sizing:border-box"></div><div class="a s" style="left:1852px;top:991px;font-size:12px;line-height:14px;color:#000">默认</div><svg class="a" style="left:1903px;top:995px" width="9" height="6"><path d="M0 0h8L4 5z" fill="#111"/></svg><div class="a" style="left:0px;top:1010px;width:1920px;height:22px;background:#c0c0c0"></div><div class="a" style="left:2px;top:1013px;width:58px;height:16px;background:#ffff00"></div><div class="a s" style="left:12px;top:1014px;font-size:12px;line-height:14px;color:#ff0000">已暂停</div><div class="a" style="left:66px;top:1013px;width:1701px;height:17px;border-left:1px solid #808080;border-top:1px solid #808080;border-bottom:1px solid #dcdcdc;border-right:1px solid #dcdcdc;box-sizing:border-box"></div><div class="a s" style="left:70px;top:1014px;font-size:12px;line-height:14px;color:#000">硬件断点</div><div class="a m" style="left:131px;top:1015px;font-size:10px;line-height:13px;color:#000">(dword,</div><div class="a s" style="left:184px;top:1014px;font-size:12px;line-height:14px;color:#000">写入)</div><div class="a s" style="left:225px;top:1014px;font-size:12px;line-height:14px;color:#000">于</div><div class="a m" style="left:250px;top:1015px;font-size:10px;line-height:13px;color:#000"><span style="color:#0000ff;text-decoration:underline">1F7B8770</span>!</div><div class="a" style="left:1774px;top:1013px;width:145px;height:17px;border-left:1px solid #808080;border-top:1px solid #808080;border-bottom:1px solid #dcdcdc;border-right:1px solid #dcdcdc;box-sizing:border-box;background:#c0c0c0"></div><div class="a s" style="left:1778px;top:1014px;font-size:12px;line-height:14px;color:#000">已调试时间:</div><div class="a s" style="left:1856px;top:1014px;font-size:12px;line-height:14px;color:#000;letter-spacing:0.4px">0:00:15:35</div><svg class="a" style="left:1700px;top:930px" width="220" height="85" viewBox="1700 930 220 85"><path d="M1743 972L1743.0 939.0M1743.0 957.1L1748.8 950.3M1743.0 957.1L1737.2 950.3M1743.0 947.2L1747.5 941.9M1743.0 947.2L1738.5 941.9M1743 972L1714.4 955.5M1730.1 964.6L1727.1 956.1M1730.1 964.6L1721.3 966.1M1721.6 959.6L1719.2 953.0M1721.6 959.6L1714.7 960.8M1743 972L1714.4 988.5M1730.1 979.4L1721.3 977.9M1730.1 979.4L1727.1 987.9M1721.6 984.4L1714.7 983.2M1721.6 984.4L1719.2 991.0M1743 972L1743.0 1005.0M1743.0 986.9L1737.2 993.7M1743.0 986.9L1748.8 993.7M1743.0 996.8L1738.5 1002.1M1743.0 996.8L1747.5 1002.1M1743 972L1771.6 988.5M1755.9 979.4L1758.9 987.9M1755.9 979.4L1764.7 977.9M1764.4 984.4L1766.8 991.0M1764.4 984.4L1771.3 983.2M1743 972L1771.6 955.5M1755.9 964.6L1764.7 966.1M1755.9 964.6L1758.9 956.1M1764.4 959.6L1771.3 960.8M1764.4 959.6L1766.8 953.0" fill="none" stroke="#000" stroke-opacity="0.07" stroke-width="6" stroke-linecap="round" transform="translate(1 1.5)"/><path d="M1743 972L1743.0 939.0M1743.0 957.1L1748.8 950.3M1743.0 957.1L1737.2 950.3M1743.0 947.2L1747.5 941.9M1743.0 947.2L1738.5 941.9M1743 972L1714.4 955.5M1730.1 964.6L1727.1 956.1M1730.1 964.6L1721.3 966.1M1721.6 959.6L1719.2 953.0M1721.6 959.6L1714.7 960.8M1743 972L1714.4 988.5M1730.1 979.4L1721.3 977.9M1730.1 979.4L1727.1 987.9M1721.6 984.4L1714.7 983.2M1721.6 984.4L1719.2 991.0M1743 972L1743.0 1005.0M1743.0 986.9L1737.2 993.7M1743.0 986.9L1748.8 993.7M1743.0 996.8L1738.5 1002.1M1743.0 996.8L1747.5 1002.1M1743 972L1771.6 988.5M1755.9 979.4L1758.9 987.9M1755.9 979.4L1764.7 977.9M1764.4 984.4L1766.8 991.0M1764.4 984.4L1771.3 983.2M1743 972L1771.6 955.5M1755.9 964.6L1764.7 966.1M1755.9 964.6L1758.9 956.1M1764.4 959.6L1771.3 960.8M1764.4 959.6L1766.8 953.0" fill="none" stroke="#fff" stroke-opacity="0.85" stroke-width="3.5" stroke-linecap="round"/></svg><div class="a s" style="left:1785px;top:943px;font-size:53px;line-height:60px;color:rgba(255,255,255,0.85);text-shadow:1px 1.5px 2px rgba(0,0,0,0.10);font-weight:300;letter-spacing:2px">看雪</div><svg class="a" style="left:1840px;top:875px" width="60" height="60" viewBox="1840 875 60 60"><defs><linearGradient id="rg" x1="0" y1="0" x2="1" y2="1"><stop offset="0" stop-color="#6cc8e8"/><stop offset="0.55" stop-color="#b0a8e4"/><stop offset="1" stop-color="#f4a0cc"/></linearGradient></defs><circle cx="1869.7" cy="905.8" r="21.7" fill="#ffffff" fill-opacity="0.55" stroke="url(#rg)" stroke-width="3.7"/><g fill="none" stroke="#000" stroke-width="3.6" stroke-linecap="round" stroke-linejoin="round"><path d="M1861 896.5L1869 900.6L1875.5 897.7"/><path d="M1858 902.5L1865.6 908.7L1866.2 918"/><path d="M1881.9 903.5L1874.3 908.1L1873.7 918"/></g><circle cx="1883" cy="892.4" r="8.7" fill="#e03a3a"/><text x="1883" y="897.5" text-anchor="middle" font-family="Liberation Sans" font-size="13" fill="#fff">1</text></svg></body></html>
